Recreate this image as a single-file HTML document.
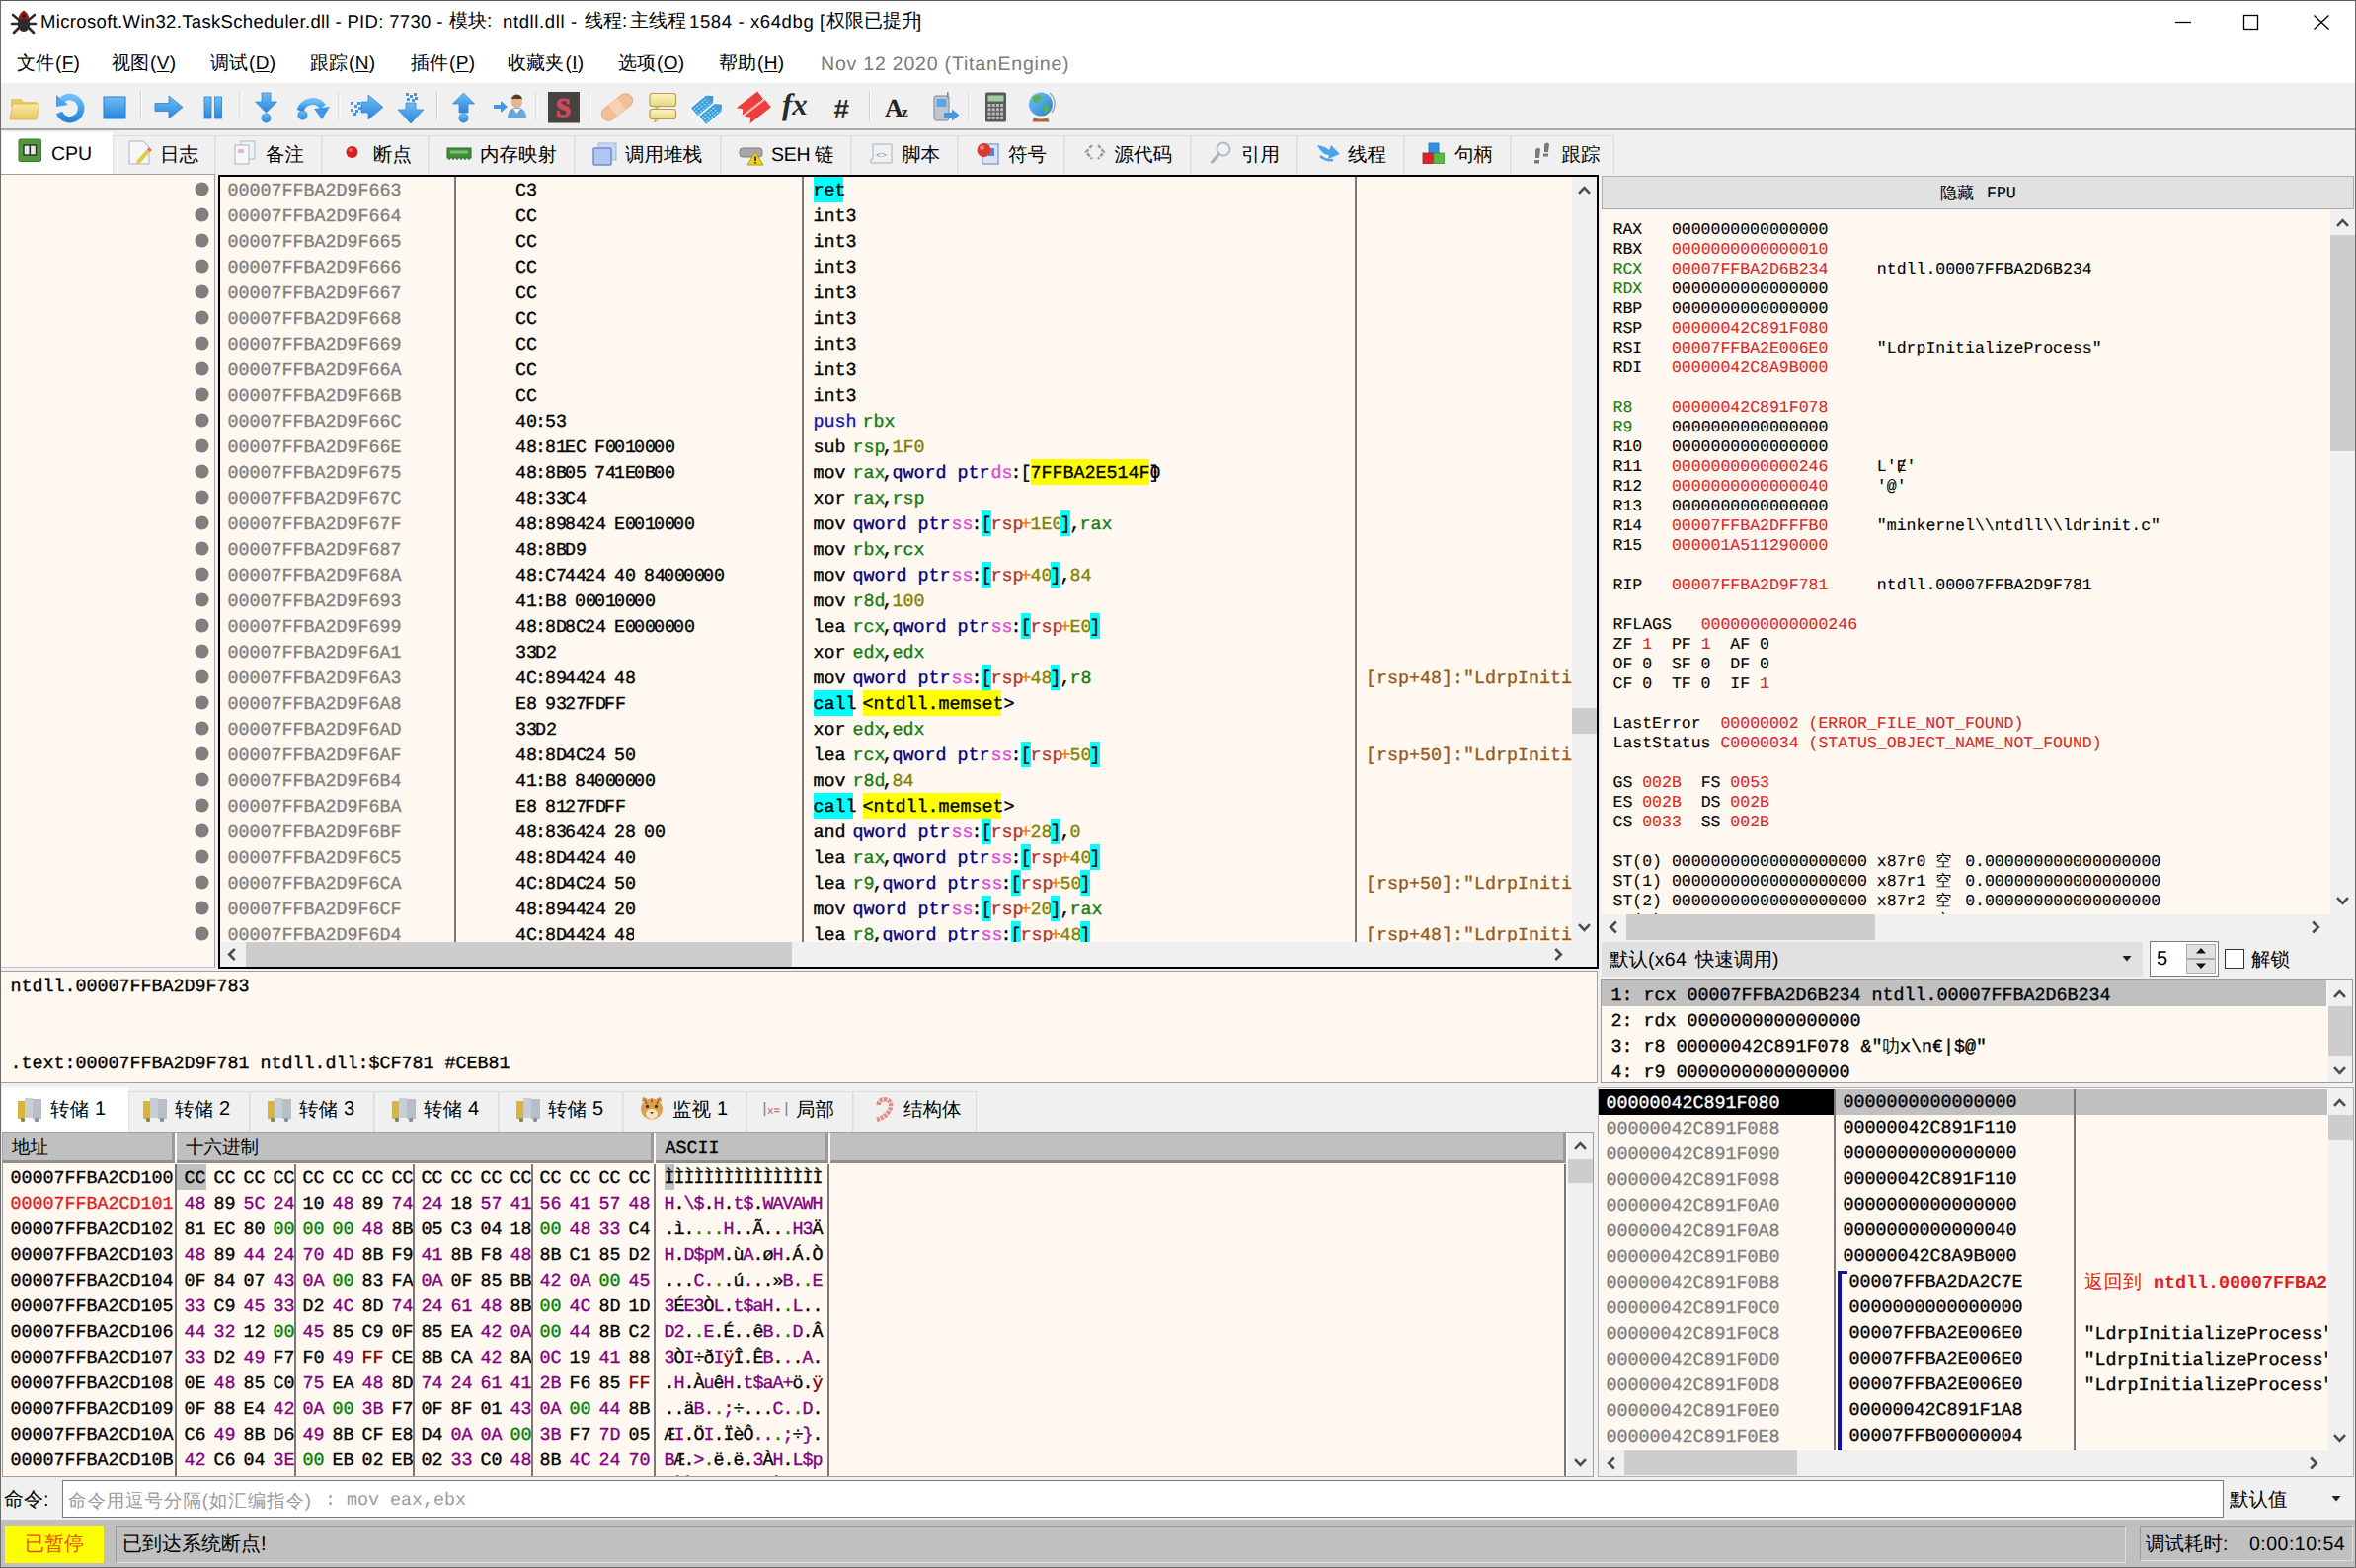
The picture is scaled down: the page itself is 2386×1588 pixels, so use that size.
<!DOCTYPE html>
<html lang="zh"><head><meta charset="utf-8"><title>x64dbg</title>
<style>
*{box-sizing:border-box}
html,body{margin:0;padding:0}
body{width:2386px;height:1588px;position:relative;overflow:hidden;background:#F0F0F0;
 font-family:"Liberation Sans",sans-serif;font-size:18.5px;color:#000;text-rendering:geometricPrecision;}
.a{position:absolute}
.u{position:absolute;white-space:pre;font-family:"Liberation Sans",sans-serif;line-height:26px;height:26px}
.m{font-family:"Liberation Mono",monospace;font-size:18.33px;white-space:pre;-webkit-text-stroke:0.35px}
.r{position:absolute;height:26px;line-height:29px;white-space:pre;font-family:"Liberation Mono",monospace;font-size:18.3333px;-webkit-text-stroke:0.35px}
.r i{font-style:normal;display:inline-block;vertical-align:top;height:26px;line-height:29px;overflow:visible}
.g{position:absolute;height:20px;line-height:24px;white-space:pre;font-family:"Liberation Mono",monospace;font-size:16.5px;-webkit-text-stroke:0.12px}
.g i{font-style:normal}
svg{position:absolute;overflow:visible}
</style></head>
<body>
<div class="a" style="left:0px;top:0px;width:2386px;height:84px;background:#FFFFFF;"></div>
<svg style="left:10px;top:9px" width="28" height="26" viewBox="0 0 28 26">
<g stroke="#2b2b2b" stroke-width="2.6" fill="none" stroke-linecap="round">
<path d="M9 11 L3 6"/><path d="M19 11 L25 6"/><path d="M8 15 L2 15"/><path d="M20 15 L26 15"/><path d="M9 19 L4 24"/><path d="M19 19 L24 24"/></g>
<ellipse cx="14" cy="15.5" rx="6.2" ry="7.5" fill="#2b2b2b"/>
<path d="M14 1.5 C10 4 8.5 7 9 10.5 L19 10.5 C19.5 7 18 4 14 1.5Z" fill="#8E1B1B"/>
<circle cx="14" cy="7" r="1.7" fill="#3a0a0a"/>
</svg>
<div class="u" style="left:41px;top:9px;font-size:18.5px;color:#000;letter-spacing:0.34px;">Microsoft.Win32.TaskScheduler.dll - PID: 7730 - </div>
<div class="u" style="left:455px;top:9px;font-size:19px;color:#000;">模块:</div>
<div class="u" style="left:509px;top:9px;font-size:18.5px;color:#000;letter-spacing:0.62px;">ntdll.dll - </div>
<div class="u" style="left:592px;top:9px;font-size:19px;color:#000;">线程:</div>
<div class="u" style="left:638px;top:9px;font-size:19px;color:#000;">主线程</div>
<div class="u" style="left:698px;top:9px;font-size:18.5px;color:#000;letter-spacing:0.62px;">1584 - x64dbg [</div>
<div class="u" style="left:837px;top:9px;font-size:19px;color:#000;">权限已提升</div>
<div class="u" style="left:928px;top:9px;font-size:18.5px;color:#000;">]</div>
<svg style="left:2190px;top:8px" width="190" height="30" viewBox="0 0 190 30">
<path d="M13 14.5 H29" stroke="#000" stroke-width="1.3"/>
<rect x="82.5" y="7.5" width="14" height="14" fill="none" stroke="#000" stroke-width="1.3"/>
<path d="M153.5 7.5 L168.5 21.5 M168.5 7.5 L153.5 21.5" stroke="#000" stroke-width="1.3"/>
</svg>
<div class="u" style="left:17px;top:52px;font-size:19px">文件</div>
<div class="u" style="left:56.0px;top:52px;font-size:19px;letter-spacing:0.3px">(<span style="text-decoration:underline;text-underline-offset:2px">F</span>)</div>
<div class="u" style="left:113px;top:52px;font-size:19px">视图</div>
<div class="u" style="left:152.0px;top:52px;font-size:19px;letter-spacing:0.3px">(<span style="text-decoration:underline;text-underline-offset:2px">V</span>)</div>
<div class="u" style="left:213px;top:52px;font-size:19px">调试</div>
<div class="u" style="left:252.0px;top:52px;font-size:19px;letter-spacing:0.3px">(<span style="text-decoration:underline;text-underline-offset:2px">D</span>)</div>
<div class="u" style="left:314px;top:52px;font-size:19px">跟踪</div>
<div class="u" style="left:353.0px;top:52px;font-size:19px;letter-spacing:0.3px">(<span style="text-decoration:underline;text-underline-offset:2px">N</span>)</div>
<div class="u" style="left:416px;top:52px;font-size:19px">插件</div>
<div class="u" style="left:455.0px;top:52px;font-size:19px;letter-spacing:0.3px">(<span style="text-decoration:underline;text-underline-offset:2px">P</span>)</div>
<div class="u" style="left:514px;top:52px;font-size:19px">收藏夹</div>
<div class="u" style="left:572.5px;top:52px;font-size:19px;letter-spacing:0.3px">(<span style="text-decoration:underline;text-underline-offset:2px">I</span>)</div>
<div class="u" style="left:626px;top:52px;font-size:19px">选项</div>
<div class="u" style="left:665.0px;top:52px;font-size:19px;letter-spacing:0.3px">(<span style="text-decoration:underline;text-underline-offset:2px">O</span>)</div>
<div class="u" style="left:728px;top:52px;font-size:19px">帮助</div>
<div class="u" style="left:767.0px;top:52px;font-size:19px;letter-spacing:0.3px">(<span style="text-decoration:underline;text-underline-offset:2px">H</span>)</div>
<div class="u" style="left:831px;top:52px;font-size:19.5px;color:#7A7A7A;letter-spacing:0.8px;">Nov 12 2020 (TitanEngine)</div>
<div class="a" style="left:1px;top:84px;width:2384px;height:46px;background:#F0F0F0;"></div>
<div class="a" style="left:0px;top:130px;width:2386px;height:2px;background:#A9A9A9;"></div>
<svg style="left:0;top:84px" width="1100" height="46" viewBox="0 84 1100 46">
<defs><linearGradient id="bl" x1="0" y1="0" x2="0" y2="1"><stop offset="0" stop-color="#6DBEF7"/><stop offset="1" stop-color="#2A85DB"/></linearGradient><linearGradient id="yl" x1="0" y1="0" x2="0" y2="1"><stop offset="0" stop-color="#F9E9A8"/><stop offset="1" stop-color="#E9C565"/></linearGradient><linearGradient id="yl2" x1="0" y1="0" x2="0" y2="1"><stop offset="0" stop-color="#FBF4C4"/><stop offset="1" stop-color="#E8D97E"/></linearGradient><linearGradient id="gl" x1="0" y1="0" x2="1" y2="1"><stop offset="0" stop-color="#7CC6F5"/><stop offset="1" stop-color="#1F7FD0"/></linearGradient></defs>
<rect x="142.0" y="92" width="1" height="30" fill="#D0D0D0"/><rect x="143.0" y="92" width="1" height="30" fill="#FFFFFF"/>
<rect x="242.5" y="92" width="1" height="30" fill="#D0D0D0"/><rect x="243.5" y="92" width="1" height="30" fill="#FFFFFF"/>
<rect x="342.5" y="92" width="1" height="30" fill="#D0D0D0"/><rect x="343.5" y="92" width="1" height="30" fill="#FFFFFF"/>
<rect x="442.0" y="92" width="1" height="30" fill="#D0D0D0"/><rect x="443.0" y="92" width="1" height="30" fill="#FFFFFF"/>
<rect x="542.5" y="92" width="1" height="30" fill="#D0D0D0"/><rect x="543.5" y="92" width="1" height="30" fill="#FFFFFF"/>
<rect x="596.5" y="92" width="1" height="30" fill="#D0D0D0"/><rect x="597.5" y="92" width="1" height="30" fill="#FFFFFF"/>
<rect x="880.0" y="92" width="1" height="30" fill="#D0D0D0"/><rect x="881.0" y="92" width="1" height="30" fill="#FFFFFF"/>
<rect x="980.5" y="92" width="1" height="30" fill="#D0D0D0"/><rect x="981.5" y="92" width="1" height="30" fill="#FFFFFF"/>
<path d="M11 100 h10 l3 3 h13 v5 h-26z" fill="#E8C867"/><path d="M10 121 L13 105 H40 L37 121Z" fill="url(#yl)" stroke="#D9B24E" stroke-width="0.8"/>
<path d="M63 101 A11.5 11.5 0 1 1 60 114" fill="none" stroke="url(#bl)" stroke-width="6.5"/><path d="M57 96 L57 108 L69 106Z" fill="#49A3EE"/>
<rect x="105" y="98" width="22" height="22" fill="url(#bl)" stroke="#2B7FD0" stroke-width="1"/>
<path d="M157 104.5 H171 V97 L185 108.5 L171 120 V112.5 H157Z" fill="url(#bl)" stroke="#2B7FD0" stroke-width="0.8"/>
<rect x="207" y="98" width="7" height="22" fill="url(#bl)" stroke="#2B7FD0" stroke-width="0.8"/><rect x="217.5" y="98" width="7" height="22" fill="url(#bl)" stroke="#2B7FD0" stroke-width="0.8"/>
<path d="M265 94 h9 v9 h6.5 l-11 11 l-11 -11 h6.5z" fill="url(#bl)" stroke="#2B7FD0" stroke-width="0.7"/><circle cx="269.5" cy="119.5" r="4.6" fill="url(#bl)" stroke="#2B7FD0" stroke-width="0.7"/>
<path d="M304 112 A13 13 0 0 1 327 108" fill="none" stroke="url(#bl)" stroke-width="7"/><path d="M318 110 L334 108 L326 121Z" fill="#3F97E6"/><circle cx="306.5" cy="116.5" r="4.6" fill="url(#bl)" stroke="#2B7FD0" stroke-width="0.7"/>
<path d="M366 103 H373 V96 L388 108.5 L373 121 V114 H366Z" fill="url(#bl)" stroke="#2B7FD0" stroke-width="0.7"/>
<rect x="355" y="103" width="3" height="3" fill="#3F97E6"/>
<rect x="359" y="106" width="3" height="3" fill="#3F97E6"/>
<rect x="355" y="110" width="3" height="3" fill="#3F97E6"/>
<rect x="360" y="111" width="3" height="3" fill="#3F97E6"/>
<rect x="362" y="103" width="3" height="3" fill="#3F97E6"/>
<rect x="363" y="108" width="3" height="3" fill="#3F97E6"/>
<rect x="358" y="114" width="3" height="3" fill="#3F97E6"/>
<path d="M411 104 V111 H403 L416 125 L429 111 H421 V104Z" fill="url(#bl)" stroke="#2B7FD0" stroke-width="0.7"/>
<rect x="411" y="94" width="3" height="3" fill="#3F97E6"/>
<rect x="415" y="96" width="3" height="3" fill="#3F97E6"/>
<rect x="419" y="94" width="3" height="3" fill="#3F97E6"/>
<rect x="412" y="99" width="3" height="3" fill="#3F97E6"/>
<rect x="417" y="100" width="3" height="3" fill="#3F97E6"/>
<rect x="420" y="98" width="3" height="3" fill="#3F97E6"/>
<path d="M465 114 h9 v-9 h6.5 l-11 -11 l-11 11 h6.5z" fill="url(#bl)" stroke="#2B7FD0" stroke-width="0.7"/><circle cx="469.5" cy="119.5" r="4.6" fill="url(#bl)" stroke="#2B7FD0" stroke-width="0.7"/>
<path d="M500 106 H507 V102 L514 108 L507 114 V110 H500Z" fill="#3F97E6"/><circle cx="523.5" cy="103.5" r="5.5" fill="#E8B58F"/><path d="M518 101 a5.5 5.5 0 0 1 11 0 l-1 -1 h-9z" fill="#5A3A22"/><path d="M514 120 c0 -9 5 -11 9.5 -11 s9.5 2 9.5 11z" fill="#6FA6DA"/><path d="M520 110 l3.5 5 l3.5 -5z" fill="#fff"/>
<rect x="555" y="93" width="32" height="31.5" fill="#474343"/><text x="570.5" y="118" font-family="Liberation Serif" font-weight="bold" font-size="27" fill="#CF4A58" text-anchor="middle" stroke="#CF4A58" stroke-width="1.2">S</text>
<g transform="rotate(-38 625 108.5)"><rect x="607" y="101.5" width="36" height="14" rx="7" fill="#F4BE94" stroke="#E0A070" stroke-width="0.8"/><rect x="619.5" y="101.5" width="11" height="14" fill="#F8D2B2"/></g>
<rect x="658" y="94.5" width="26.5" height="13" rx="2.5" fill="url(#yl2)" stroke="#B89D55" stroke-width="1.2"/><path d="M664 107.5 l0 3.5 l4 -3.5z" fill="#E9DC98" stroke="#B89D55" stroke-width="1"/><rect x="658" y="110.5" width="26.5" height="10" rx="2.5" fill="url(#yl2)" stroke="#B89D55" stroke-width="1.2"/><path d="M663 120.5 l0 3.5 l4 -3.5z" fill="#E9DC98" stroke="#B89D55" stroke-width="1"/>
<g transform="rotate(-40 717 109)"><path d="M703 97.5 h21 l6 6 l-6 6 h-21z" fill="#3A9FDC" stroke="#F4F8FB" stroke-width="1.6"/><path d="M704 109.5 h21 l6 6 l-6 6 h-21z" fill="#3A9FDC" stroke="#F4F8FB" stroke-width="1.6"/><path d="M705 101 h18 M705 104 h18 M705 107 h18 M706 113 h18 M706 116 h18 M706 119 h18" stroke="#BFE0F4" stroke-width="1.1" stroke-dasharray="2 1.5"/></g>
<g transform="rotate(-38 763 108.5)"><path d="M749 98.5 h27 v9.5 h-27 l4.5 -4.7z" fill="#EE3B3B"/><path d="M750 110 h27 v9.5 h-27 l4.5 -4.7z" fill="#EE3B3B"/><path d="M752 108.8 h25" stroke="#F59A9A" stroke-width="1"/></g>
<text x="792" y="116" font-family="Liberation Serif" font-style="italic" font-weight="bold" font-size="31" fill="#2A2A2A">fx</text>
<text x="844" y="120" font-family="Liberation Sans" font-style="italic" font-weight="bold" font-size="28" fill="#2A2A2A">#</text>
<text x="896" y="118" font-family="Liberation Serif" font-weight="bold" font-size="26" fill="#222">A</text><text x="913" y="118" font-family="Liberation Serif" font-weight="bold" font-size="15" fill="#222">z</text>
<rect x="946" y="97" width="15" height="25" rx="2" fill="#BFC6CE" stroke="#7F8893" stroke-width="1"/><rect x="948.5" y="100" width="10" height="8" fill="#58A7E6"/><rect x="959" y="93" width="1.6" height="6" fill="#7F8893"/><path d="M956 114 H964 V110.5 L971.5 116.5 L964 122.5 V119 H956Z" fill="#3F97E6"/>
<rect x="998" y="93.5" width="21" height="30" rx="1.5" fill="#5A5A5A"/><rect x="1000.5" y="96.5" width="16" height="6" fill="#9FCF9A"/>
<rect x="1000.5" y="105.0" width="3" height="3" fill="#B9B9B9"/>
<rect x="1004.7" y="105.0" width="3" height="3" fill="#B9B9B9"/>
<rect x="1008.9" y="105.0" width="3" height="3" fill="#B9B9B9"/>
<rect x="1013.1" y="105.0" width="3" height="3" fill="#B9B9B9"/>
<rect x="1000.5" y="109.3" width="3" height="3" fill="#B9B9B9"/>
<rect x="1004.7" y="109.3" width="3" height="3" fill="#B9B9B9"/>
<rect x="1008.9" y="109.3" width="3" height="3" fill="#B9B9B9"/>
<rect x="1013.1" y="109.3" width="3" height="3" fill="#B9B9B9"/>
<rect x="1000.5" y="113.6" width="3" height="3" fill="#B9B9B9"/>
<rect x="1004.7" y="113.6" width="3" height="3" fill="#B9B9B9"/>
<rect x="1008.9" y="113.6" width="3" height="3" fill="#B9B9B9"/>
<rect x="1013.1" y="113.6" width="3" height="3" fill="#B9B9B9"/>
<rect x="1000.5" y="117.9" width="3" height="3" fill="#B9B9B9"/>
<rect x="1004.7" y="117.9" width="3" height="3" fill="#B9B9B9"/>
<rect x="1008.9" y="117.9" width="3" height="3" fill="#B9B9B9"/>
<rect x="1013.1" y="117.9" width="3" height="3" fill="#B9B9B9"/>
<circle cx="1054" cy="105.5" r="12" fill="url(#gl)"/><path d="M1046 98 q5 -4 9 0 q-1 5 -5 6 q-5 0 -4 -6z M1056 106 q6 -2 7 3 q-2 6 -6 5z" fill="#57B05A"/><path d="M1047 119 q7 3 14 0 l1.5 4.5 h-17z" fill="#B5642F"/><path d="M1063 94 a14.5 14.5 0 0 1 2 20" fill="none" stroke="#A0A8B0" stroke-width="1.5"/>
</svg>
<div class="a" style="left:1px;top:132px;width:2384px;height:45px;background:#F0F0F0;"></div>
<div class="a" style="left:2px;top:134px;width:112px;height:43px;background:#FFFFFF;"></div>
<div class="u" style="left:52px;top:143px;font-size:19.5px;letter-spacing:0px">CPU</div>
<div class="a" style="left:114px;top:137px;width:104px;height:40px;border:1px solid #DCDCDC;border-bottom:none;border-left:1px solid #E4E4E4;"></div>
<div class="u" style="left:162px;top:143.5px;font-size:19.5px">日志</div>
<div class="a" style="left:218px;top:137px;width:108px;height:40px;border:1px solid #DCDCDC;border-bottom:none;border-left:1px solid #E4E4E4;"></div>
<div class="u" style="left:269px;top:143.5px;font-size:19.5px">备注</div>
<div class="a" style="left:326px;top:137px;width:108px;height:40px;border:1px solid #DCDCDC;border-bottom:none;border-left:1px solid #E4E4E4;"></div>
<div class="u" style="left:378px;top:143.5px;font-size:19.5px">断点</div>
<div class="a" style="left:434px;top:137px;width:148px;height:40px;border:1px solid #DCDCDC;border-bottom:none;border-left:1px solid #E4E4E4;"></div>
<div class="u" style="left:486px;top:143.5px;font-size:19.5px">内存映射</div>
<div class="a" style="left:582px;top:137px;width:148px;height:40px;border:1px solid #DCDCDC;border-bottom:none;border-left:1px solid #E4E4E4;"></div>
<div class="u" style="left:633px;top:143.5px;font-size:19.5px">调用堆栈</div>
<div class="a" style="left:730px;top:137px;width:132px;height:40px;border:1px solid #DCDCDC;border-bottom:none;border-left:1px solid #E4E4E4;"></div>
<div class="u" style="left:781px;top:143.5px;font-size:19.5px;letter-spacing:-0.3px">SEH </div>
<div class="u" style="left:825px;top:143.5px;font-size:19.5px">链</div>
<div class="a" style="left:862px;top:137px;width:108px;height:40px;border:1px solid #DCDCDC;border-bottom:none;border-left:1px solid #E4E4E4;"></div>
<div class="u" style="left:913px;top:143.5px;font-size:19.5px">脚本</div>
<div class="a" style="left:970px;top:137px;width:108px;height:40px;border:1px solid #DCDCDC;border-bottom:none;border-left:1px solid #E4E4E4;"></div>
<div class="u" style="left:1021px;top:143.5px;font-size:19.5px">符号</div>
<div class="a" style="left:1078px;top:137px;width:128px;height:40px;border:1px solid #DCDCDC;border-bottom:none;border-left:1px solid #E4E4E4;"></div>
<div class="u" style="left:1128.5px;top:143.5px;font-size:19.5px">源代码</div>
<div class="a" style="left:1206px;top:137px;width:108px;height:40px;border:1px solid #DCDCDC;border-bottom:none;border-left:1px solid #E4E4E4;"></div>
<div class="u" style="left:1257px;top:143.5px;font-size:19.5px">引用</div>
<div class="a" style="left:1314px;top:137px;width:108px;height:40px;border:1px solid #DCDCDC;border-bottom:none;border-left:1px solid #E4E4E4;"></div>
<div class="u" style="left:1365px;top:143.5px;font-size:19.5px">线程</div>
<div class="a" style="left:1422px;top:137px;width:108px;height:40px;border:1px solid #DCDCDC;border-bottom:none;border-left:1px solid #E4E4E4;"></div>
<div class="u" style="left:1473px;top:143.5px;font-size:19.5px">句柄</div>
<div class="a" style="left:1530px;top:137px;width:105px;height:40px;border:1px solid #DCDCDC;border-bottom:none;border-left:1px solid #E4E4E4;"></div>
<div class="u" style="left:1581.5px;top:143.5px;font-size:19.5px">跟踪</div>
<svg style="left:0;top:132px" width="1640" height="45" viewBox="0 132 1640 45">
<rect x="19" y="141" width="22.5" height="22.5" rx="1.5" fill="#4E9A3A" stroke="#3B7A2B" stroke-width="1"/><rect x="24" y="147" width="12.5" height="10" fill="#E9EEE6" stroke="#2F2F2F" stroke-width="1.4"/><rect x="29.5" y="147" width="1.6" height="10" fill="#2F2F2F"/>
<path d="M131 143 h14 l6 6 v17 h-20z" fill="#F4F7FA" stroke="#A9B4BF" stroke-width="1"/><path d="M139 162 l10 -11 l3 3 l-10 11 l-4 1z" fill="#E8C84A"/><path d="M149 151 l2 -2 l3 3 l-2 2z" fill="#E07070"/>
<rect x="244" y="143" width="14" height="18" fill="#EEF2F6" stroke="#B0BAC4" stroke-width="1"/><rect x="238" y="147" width="14" height="19" fill="#F6F8FA" stroke="#A9B4BF" stroke-width="1"/><rect x="241" y="151" width="6" height="4" fill="#E8B5C0"/>
<circle cx="356.5" cy="154" r="6" fill="#D81E1E"/><circle cx="355" cy="152" r="2" fill="#EE6A6A"/>
<rect x="453" y="150" width="24" height="10" fill="#3F8F3A" stroke="#2E6E2A" stroke-width="1"/><rect x="456" y="152.5" width="18" height="3" fill="#79C070"/><path d="M455 160 v2 M459 160 v2 M463 160 v2 M467 160 v2 M471 160 v2 M475 160 v2" stroke="#2E6E2A" stroke-width="1.4"/>
<rect x="606" y="145" width="18" height="17" fill="#C9D7F0" stroke="#9FB3DC" stroke-width="1"/><rect x="601" y="150" width="18" height="17" rx="1" fill="#AFC6EE" stroke="#6F8FD0" stroke-width="1.5"/>
<rect x="749" y="150" width="23" height="9" rx="3" fill="#A8A8A8" stroke="#7E7E7E" stroke-width="1"/><path d="M765 154 l8 13 h-16z" fill="#F2D21C" stroke="#B89C10" stroke-width="1"/><rect x="764.2" y="158.5" width="1.8" height="4.5" fill="#333"/><rect x="764.2" y="164" width="1.8" height="1.6" fill="#333"/>
<path d="M884 146 h19 v19 h-21 v-4 h2z" fill="#EEF0F2" stroke="#AAB2BA" stroke-width="1"/><text x="887" y="160" font-family="Liberation Mono" font-size="9" fill="#8A94A0">&lt;&gt;</text>
<rect x="995" y="146" width="16" height="20" fill="#D9E3F4" stroke="#7A93C8" stroke-width="1.2"/><rect x="1001" y="150" width="6" height="8" fill="#5E7FD0"/><circle cx="996.5" cy="152" r="7" fill="#D83A34"/><circle cx="994.5" cy="149.5" r="2.3" fill="#F08A80"/>
<path d="M1106 147 l-6 7 l6 7 M1112 147 l6 7 l-6 7" fill="none" stroke="#9A9A9A" stroke-width="2.4" stroke-dasharray="4 1.5"/>
<circle cx="1239" cy="151" r="6.5" fill="#EEF2F6" stroke="#B4BCC6" stroke-width="2"/><path d="M1234.5 156 l-7 8" stroke="#B0B0B0" stroke-width="3.2" stroke-linecap="round"/>
<path d="M1334 147 q8 1 12 5 l2 -5 l9 9 l-12 5 l1 -4 q-7 0 -12 -10z" fill="#4CA3EA"/><path d="M1337 158 q6 5 13 4" fill="none" stroke="#4CA3EA" stroke-width="2.5"/>
<rect x="1447" y="145" width="10" height="10" fill="#2F8FE0" stroke="#1E6FBF" stroke-width="0.8"/><rect x="1441" y="155" width="10.5" height="10.5" fill="#D8262C" stroke="#A81C20" stroke-width="0.8"/><rect x="1452" y="155" width="10.5" height="10.5" fill="#58B947" stroke="#3E9030" stroke-width="0.8"/>
<path d="M1555 152 q2 -4 5 -1 l-1 9 l-4 0z M1564 146 q3 -3 5 0 l-1 8 l-4 0z" fill="#7A7A7A"/><rect x="1554" y="162" width="5" height="3.5" fill="#7A7A7A"/><rect x="1563" y="155.5" width="5" height="3" fill="#7A7A7A"/>
</svg>
<div class="a" style="left:1px;top:177px;width:216px;height:802px;background:#FFF8F0;"></div>
<div class="a" style="left:0px;top:176px;width:218px;height:1px;background:#A0A0A0;"></div>
<div class="a" style="left:217px;top:177px;width:1px;height:803px;background:#A0A0A0;"></div>
<div class="a" style="left:1px;top:979px;width:217px;height:1px;background:#C8C0D0;"></div>
<div class="a" style="left:221px;top:177px;width:1398px;height:804px;background:#000;"></div>
<div class="a" style="left:223px;top:179px;width:1394px;height:800px;background:#FFF8F0;"></div>
<div class="a" style="left:460px;top:179px;width:2px;height:775px;background:#7C7878;"></div>
<div class="a" style="left:812px;top:179px;width:2px;height:775px;background:#7C7878;"></div>
<div class="a" style="left:1372px;top:179px;width:2px;height:775px;background:#7C7878;"></div>
<svg style="left:0;top:0" width="220" height="980"><circle cx="204.5" cy="191.5" r="7" fill="#7F7F7F"/><circle cx="204.5" cy="217.5" r="7" fill="#7F7F7F"/><circle cx="204.5" cy="243.5" r="7" fill="#7F7F7F"/><circle cx="204.5" cy="269.5" r="7" fill="#7F7F7F"/><circle cx="204.5" cy="295.5" r="7" fill="#7F7F7F"/><circle cx="204.5" cy="321.5" r="7" fill="#7F7F7F"/><circle cx="204.5" cy="347.5" r="7" fill="#7F7F7F"/><circle cx="204.5" cy="373.5" r="7" fill="#7F7F7F"/><circle cx="204.5" cy="399.5" r="7" fill="#7F7F7F"/><circle cx="204.5" cy="425.5" r="7" fill="#7F7F7F"/><circle cx="204.5" cy="451.5" r="7" fill="#7F7F7F"/><circle cx="204.5" cy="477.5" r="7" fill="#7F7F7F"/><circle cx="204.5" cy="503.5" r="7" fill="#7F7F7F"/><circle cx="204.5" cy="529.5" r="7" fill="#7F7F7F"/><circle cx="204.5" cy="555.5" r="7" fill="#7F7F7F"/><circle cx="204.5" cy="581.5" r="7" fill="#7F7F7F"/><circle cx="204.5" cy="607.5" r="7" fill="#7F7F7F"/><circle cx="204.5" cy="633.5" r="7" fill="#7F7F7F"/><circle cx="204.5" cy="659.5" r="7" fill="#7F7F7F"/><circle cx="204.5" cy="685.5" r="7" fill="#7F7F7F"/><circle cx="204.5" cy="711.5" r="7" fill="#7F7F7F"/><circle cx="204.5" cy="737.5" r="7" fill="#7F7F7F"/><circle cx="204.5" cy="763.5" r="7" fill="#7F7F7F"/><circle cx="204.5" cy="789.5" r="7" fill="#7F7F7F"/><circle cx="204.5" cy="815.5" r="7" fill="#7F7F7F"/><circle cx="204.5" cy="841.5" r="7" fill="#7F7F7F"/><circle cx="204.5" cy="867.5" r="7" fill="#7F7F7F"/><circle cx="204.5" cy="893.5" r="7" fill="#7F7F7F"/><circle cx="204.5" cy="919.5" r="7" fill="#7F7F7F"/><circle cx="204.5" cy="945.5" r="7" fill="#7F7F7F"/></svg>
<div class="r" style="left:230.5px;top:179px;color:#808080;">00007FFBA2D9F663</div>
<div class="r" style="left:522px;top:179px;"><i style="width:20px;">C3</i></div>
<div class="r" style="left:823.5px;top:179px;"><i style="width:30px;background:#00FFFF;">ret</i></div>
<div class="r" style="left:230.5px;top:205px;color:#808080;">00007FFBA2D9F664</div>
<div class="r" style="left:522px;top:205px;"><i style="width:20px;">CC</i></div>
<div class="r" style="left:823.5px;top:205px;"><i style="width:40px;">int3</i></div>
<div class="r" style="left:230.5px;top:231px;color:#808080;">00007FFBA2D9F665</div>
<div class="r" style="left:522px;top:231px;"><i style="width:20px;">CC</i></div>
<div class="r" style="left:823.5px;top:231px;"><i style="width:40px;">int3</i></div>
<div class="r" style="left:230.5px;top:257px;color:#808080;">00007FFBA2D9F666</div>
<div class="r" style="left:522px;top:257px;"><i style="width:20px;">CC</i></div>
<div class="r" style="left:823.5px;top:257px;"><i style="width:40px;">int3</i></div>
<div class="r" style="left:230.5px;top:283px;color:#808080;">00007FFBA2D9F667</div>
<div class="r" style="left:522px;top:283px;"><i style="width:20px;">CC</i></div>
<div class="r" style="left:823.5px;top:283px;"><i style="width:40px;">int3</i></div>
<div class="r" style="left:230.5px;top:309px;color:#808080;">00007FFBA2D9F668</div>
<div class="r" style="left:522px;top:309px;"><i style="width:20px;">CC</i></div>
<div class="r" style="left:823.5px;top:309px;"><i style="width:40px;">int3</i></div>
<div class="r" style="left:230.5px;top:335px;color:#808080;">00007FFBA2D9F669</div>
<div class="r" style="left:522px;top:335px;"><i style="width:20px;">CC</i></div>
<div class="r" style="left:823.5px;top:335px;"><i style="width:40px;">int3</i></div>
<div class="r" style="left:230.5px;top:361px;color:#808080;">00007FFBA2D9F66A</div>
<div class="r" style="left:522px;top:361px;"><i style="width:20px;">CC</i></div>
<div class="r" style="left:823.5px;top:361px;"><i style="width:40px;">int3</i></div>
<div class="r" style="left:230.5px;top:387px;color:#808080;">00007FFBA2D9F66B</div>
<div class="r" style="left:522px;top:387px;"><i style="width:20px;">CC</i></div>
<div class="r" style="left:823.5px;top:387px;"><i style="width:40px;">int3</i></div>
<div class="r" style="left:230.5px;top:413px;color:#808080;">00007FFBA2D9F66C</div>
<div class="r" style="left:522px;top:413px;"><i style="width:20px;">40</i><i style="width:10px;">:</i><i style="width:20px;">53</i></div>
<div class="r" style="left:823.5px;top:413px;"><i style="width:40px;color:#1414B4;">push</i><i style="width:10px;"> </i><i style="width:30px;color:#127C12;">rbx</i></div>
<div class="r" style="left:230.5px;top:439px;color:#808080;">00007FFBA2D9F66E</div>
<div class="r" style="left:522px;top:439px;"><i style="width:20px;">48</i><i style="width:10px;">:</i><i style="width:20px;">81</i><i style="width:20px;">EC</i><i style="width:10px;"> </i><i style="width:20px;">F0</i><i style="width:20px;">01</i><i style="width:20px;">00</i><i style="width:20px;">00</i></div>
<div class="r" style="left:823.5px;top:439px;"><i style="width:30px;">sub</i><i style="width:10px;"> </i><i style="width:30px;color:#127C12;">rsp</i><i style="width:10px;">,</i><i style="width:30px;color:#828200;">1F0</i></div>
<div class="r" style="left:230.5px;top:465px;color:#808080;">00007FFBA2D9F675</div>
<div class="r" style="left:522px;top:465px;"><i style="width:20px;">48</i><i style="width:10px;">:</i><i style="width:20px;">8B</i><i style="width:20px;">05</i><i style="width:10px;"> </i><i style="width:20px;">74</i><i style="width:20px;">1E</i><i style="width:20px;">0B</i><i style="width:20px;">00</i></div>
<div class="r" style="left:823.5px;top:465px;"><i style="width:30px;">mov</i><i style="width:10px;"> </i><i style="width:30px;color:#127C12;">rax</i><i style="width:10px;">,</i><i style="width:100px;color:#000080;">qword ptr </i><i style="width:20px;color:#D848D8;">ds</i><i style="width:10px;">:</i><i style="width:10px;">[</i><i style="width:120px;background:#FFFF00;">7FFBA2E514F0</i><i style="width:10px;">]</i></div>
<div class="r" style="left:230.5px;top:491px;color:#808080;">00007FFBA2D9F67C</div>
<div class="r" style="left:522px;top:491px;"><i style="width:20px;">48</i><i style="width:10px;">:</i><i style="width:20px;">33</i><i style="width:20px;">C4</i></div>
<div class="r" style="left:823.5px;top:491px;"><i style="width:30px;">xor</i><i style="width:10px;"> </i><i style="width:30px;color:#127C12;">rax</i><i style="width:10px;">,</i><i style="width:30px;color:#127C12;">rsp</i></div>
<div class="r" style="left:230.5px;top:517px;color:#808080;">00007FFBA2D9F67F</div>
<div class="r" style="left:522px;top:517px;"><i style="width:20px;">48</i><i style="width:10px;">:</i><i style="width:20px;">89</i><i style="width:20px;">84</i><i style="width:20px;">24</i><i style="width:10px;"> </i><i style="width:20px;">E0</i><i style="width:20px;">01</i><i style="width:20px;">00</i><i style="width:20px;">00</i></div>
<div class="r" style="left:823.5px;top:517px;"><i style="width:30px;">mov</i><i style="width:10px;"> </i><i style="width:100px;color:#000080;">qword ptr </i><i style="width:20px;color:#D848D8;">ss</i><i style="width:10px;">:</i><i style="width:10px;background:#00FFFF;">[</i><i style="width:30px;color:#B03434;">rsp</i><i style="width:10px;color:#F27711;">+</i><i style="width:30px;color:#828200;">1E0</i><i style="width:10px;background:#00FFFF;">]</i><i style="width:10px;">,</i><i style="width:30px;color:#127C12;">rax</i></div>
<div class="r" style="left:230.5px;top:543px;color:#808080;">00007FFBA2D9F687</div>
<div class="r" style="left:522px;top:543px;"><i style="width:20px;">48</i><i style="width:10px;">:</i><i style="width:20px;">8B</i><i style="width:20px;">D9</i></div>
<div class="r" style="left:823.5px;top:543px;"><i style="width:30px;">mov</i><i style="width:10px;"> </i><i style="width:30px;color:#127C12;">rbx</i><i style="width:10px;">,</i><i style="width:30px;color:#127C12;">rcx</i></div>
<div class="r" style="left:230.5px;top:569px;color:#808080;">00007FFBA2D9F68A</div>
<div class="r" style="left:522px;top:569px;"><i style="width:20px;">48</i><i style="width:10px;">:</i><i style="width:20px;">C7</i><i style="width:20px;">44</i><i style="width:20px;">24</i><i style="width:10px;"> </i><i style="width:20px;">40</i><i style="width:10px;"> </i><i style="width:20px;">84</i><i style="width:20px;">00</i><i style="width:20px;">00</i><i style="width:20px;">00</i></div>
<div class="r" style="left:823.5px;top:569px;"><i style="width:30px;">mov</i><i style="width:10px;"> </i><i style="width:100px;color:#000080;">qword ptr </i><i style="width:20px;color:#D848D8;">ss</i><i style="width:10px;">:</i><i style="width:10px;background:#00FFFF;">[</i><i style="width:30px;color:#B03434;">rsp</i><i style="width:10px;color:#F27711;">+</i><i style="width:20px;color:#828200;">40</i><i style="width:10px;background:#00FFFF;">]</i><i style="width:10px;">,</i><i style="width:20px;color:#828200;">84</i></div>
<div class="r" style="left:230.5px;top:595px;color:#808080;">00007FFBA2D9F693</div>
<div class="r" style="left:522px;top:595px;"><i style="width:20px;">41</i><i style="width:10px;">:</i><i style="width:20px;">B8</i><i style="width:10px;"> </i><i style="width:20px;">00</i><i style="width:20px;">01</i><i style="width:20px;">00</i><i style="width:20px;">00</i></div>
<div class="r" style="left:823.5px;top:595px;"><i style="width:30px;">mov</i><i style="width:10px;"> </i><i style="width:30px;color:#127C12;">r8d</i><i style="width:10px;">,</i><i style="width:30px;color:#828200;">100</i></div>
<div class="r" style="left:230.5px;top:621px;color:#808080;">00007FFBA2D9F699</div>
<div class="r" style="left:522px;top:621px;"><i style="width:20px;">48</i><i style="width:10px;">:</i><i style="width:20px;">8D</i><i style="width:20px;">8C</i><i style="width:20px;">24</i><i style="width:10px;"> </i><i style="width:20px;">E0</i><i style="width:20px;">00</i><i style="width:20px;">00</i><i style="width:20px;">00</i></div>
<div class="r" style="left:823.5px;top:621px;"><i style="width:30px;">lea</i><i style="width:10px;"> </i><i style="width:30px;color:#127C12;">rcx</i><i style="width:10px;">,</i><i style="width:100px;color:#000080;">qword ptr </i><i style="width:20px;color:#D848D8;">ss</i><i style="width:10px;">:</i><i style="width:10px;background:#00FFFF;">[</i><i style="width:30px;color:#B03434;">rsp</i><i style="width:10px;color:#F27711;">+</i><i style="width:20px;color:#828200;">E0</i><i style="width:10px;background:#00FFFF;">]</i></div>
<div class="r" style="left:230.5px;top:647px;color:#808080;">00007FFBA2D9F6A1</div>
<div class="r" style="left:522px;top:647px;"><i style="width:20px;">33</i><i style="width:20px;">D2</i></div>
<div class="r" style="left:823.5px;top:647px;"><i style="width:30px;">xor</i><i style="width:10px;"> </i><i style="width:30px;color:#127C12;">edx</i><i style="width:10px;">,</i><i style="width:30px;color:#127C12;">edx</i></div>
<div class="r" style="left:230.5px;top:673px;color:#808080;">00007FFBA2D9F6A3</div>
<div class="r" style="left:522px;top:673px;"><i style="width:20px;">4C</i><i style="width:10px;">:</i><i style="width:20px;">89</i><i style="width:20px;">44</i><i style="width:20px;">24</i><i style="width:10px;"> </i><i style="width:20px;">48</i></div>
<div class="r" style="left:823.5px;top:673px;"><i style="width:30px;">mov</i><i style="width:10px;"> </i><i style="width:100px;color:#000080;">qword ptr </i><i style="width:20px;color:#D848D8;">ss</i><i style="width:10px;">:</i><i style="width:10px;background:#00FFFF;">[</i><i style="width:30px;color:#B03434;">rsp</i><i style="width:10px;color:#F27711;">+</i><i style="width:20px;color:#828200;">48</i><i style="width:10px;background:#00FFFF;">]</i><i style="width:10px;">,</i><i style="width:20px;color:#127C12;">r8</i></div>
<div class="r" style="left:1383px;top:673px;width:208.5px;overflow:hidden;color:#96591A;">[rsp+48]:"LdrpInitializeProcess"</div>
<div class="r" style="left:230.5px;top:699px;color:#808080;">00007FFBA2D9F6A8</div>
<div class="r" style="left:522px;top:699px;"><i style="width:20px;">E8</i><i style="width:10px;"> </i><i style="width:20px;">93</i><i style="width:20px;">27</i><i style="width:20px;">FD</i><i style="width:20px;">FF</i></div>
<div class="r" style="left:823.5px;top:699px;"><i style="width:40px;background:#00FFFF;">call</i><i style="width:10px;"> </i><i style="width:140px;background:#FFFF00;">&lt;ntdll.memset&gt;</i></div>
<div class="r" style="left:230.5px;top:725px;color:#808080;">00007FFBA2D9F6AD</div>
<div class="r" style="left:522px;top:725px;"><i style="width:20px;">33</i><i style="width:20px;">D2</i></div>
<div class="r" style="left:823.5px;top:725px;"><i style="width:30px;">xor</i><i style="width:10px;"> </i><i style="width:30px;color:#127C12;">edx</i><i style="width:10px;">,</i><i style="width:30px;color:#127C12;">edx</i></div>
<div class="r" style="left:230.5px;top:751px;color:#808080;">00007FFBA2D9F6AF</div>
<div class="r" style="left:522px;top:751px;"><i style="width:20px;">48</i><i style="width:10px;">:</i><i style="width:20px;">8D</i><i style="width:20px;">4C</i><i style="width:20px;">24</i><i style="width:10px;"> </i><i style="width:20px;">50</i></div>
<div class="r" style="left:823.5px;top:751px;"><i style="width:30px;">lea</i><i style="width:10px;"> </i><i style="width:30px;color:#127C12;">rcx</i><i style="width:10px;">,</i><i style="width:100px;color:#000080;">qword ptr </i><i style="width:20px;color:#D848D8;">ss</i><i style="width:10px;">:</i><i style="width:10px;background:#00FFFF;">[</i><i style="width:30px;color:#B03434;">rsp</i><i style="width:10px;color:#F27711;">+</i><i style="width:20px;color:#828200;">50</i><i style="width:10px;background:#00FFFF;">]</i></div>
<div class="r" style="left:1383px;top:751px;width:208.5px;overflow:hidden;color:#96591A;">[rsp+50]:"LdrpInitializeProcess"</div>
<div class="r" style="left:230.5px;top:777px;color:#808080;">00007FFBA2D9F6B4</div>
<div class="r" style="left:522px;top:777px;"><i style="width:20px;">41</i><i style="width:10px;">:</i><i style="width:20px;">B8</i><i style="width:10px;"> </i><i style="width:20px;">84</i><i style="width:20px;">00</i><i style="width:20px;">00</i><i style="width:20px;">00</i></div>
<div class="r" style="left:823.5px;top:777px;"><i style="width:30px;">mov</i><i style="width:10px;"> </i><i style="width:30px;color:#127C12;">r8d</i><i style="width:10px;">,</i><i style="width:20px;color:#828200;">84</i></div>
<div class="r" style="left:230.5px;top:803px;color:#808080;">00007FFBA2D9F6BA</div>
<div class="r" style="left:522px;top:803px;"><i style="width:20px;">E8</i><i style="width:10px;"> </i><i style="width:20px;">81</i><i style="width:20px;">27</i><i style="width:20px;">FD</i><i style="width:20px;">FF</i></div>
<div class="r" style="left:823.5px;top:803px;"><i style="width:40px;background:#00FFFF;">call</i><i style="width:10px;"> </i><i style="width:140px;background:#FFFF00;">&lt;ntdll.memset&gt;</i></div>
<div class="r" style="left:230.5px;top:829px;color:#808080;">00007FFBA2D9F6BF</div>
<div class="r" style="left:522px;top:829px;"><i style="width:20px;">48</i><i style="width:10px;">:</i><i style="width:20px;">83</i><i style="width:20px;">64</i><i style="width:20px;">24</i><i style="width:10px;"> </i><i style="width:20px;">28</i><i style="width:10px;"> </i><i style="width:20px;">00</i></div>
<div class="r" style="left:823.5px;top:829px;"><i style="width:30px;">and</i><i style="width:10px;"> </i><i style="width:100px;color:#000080;">qword ptr </i><i style="width:20px;color:#D848D8;">ss</i><i style="width:10px;">:</i><i style="width:10px;background:#00FFFF;">[</i><i style="width:30px;color:#B03434;">rsp</i><i style="width:10px;color:#F27711;">+</i><i style="width:20px;color:#828200;">28</i><i style="width:10px;background:#00FFFF;">]</i><i style="width:10px;">,</i><i style="width:10px;color:#828200;">0</i></div>
<div class="r" style="left:230.5px;top:855px;color:#808080;">00007FFBA2D9F6C5</div>
<div class="r" style="left:522px;top:855px;"><i style="width:20px;">48</i><i style="width:10px;">:</i><i style="width:20px;">8D</i><i style="width:20px;">44</i><i style="width:20px;">24</i><i style="width:10px;"> </i><i style="width:20px;">40</i></div>
<div class="r" style="left:823.5px;top:855px;"><i style="width:30px;">lea</i><i style="width:10px;"> </i><i style="width:30px;color:#127C12;">rax</i><i style="width:10px;">,</i><i style="width:100px;color:#000080;">qword ptr </i><i style="width:20px;color:#D848D8;">ss</i><i style="width:10px;">:</i><i style="width:10px;background:#00FFFF;">[</i><i style="width:30px;color:#B03434;">rsp</i><i style="width:10px;color:#F27711;">+</i><i style="width:20px;color:#828200;">40</i><i style="width:10px;background:#00FFFF;">]</i></div>
<div class="r" style="left:230.5px;top:881px;color:#808080;">00007FFBA2D9F6CA</div>
<div class="r" style="left:522px;top:881px;"><i style="width:20px;">4C</i><i style="width:10px;">:</i><i style="width:20px;">8D</i><i style="width:20px;">4C</i><i style="width:20px;">24</i><i style="width:10px;"> </i><i style="width:20px;">50</i></div>
<div class="r" style="left:823.5px;top:881px;"><i style="width:30px;">lea</i><i style="width:10px;"> </i><i style="width:20px;color:#127C12;">r9</i><i style="width:10px;">,</i><i style="width:100px;color:#000080;">qword ptr </i><i style="width:20px;color:#D848D8;">ss</i><i style="width:10px;">:</i><i style="width:10px;background:#00FFFF;">[</i><i style="width:30px;color:#B03434;">rsp</i><i style="width:10px;color:#F27711;">+</i><i style="width:20px;color:#828200;">50</i><i style="width:10px;background:#00FFFF;">]</i></div>
<div class="r" style="left:1383px;top:881px;width:208.5px;overflow:hidden;color:#96591A;">[rsp+50]:"LdrpInitializeProcess"</div>
<div class="r" style="left:230.5px;top:907px;color:#808080;">00007FFBA2D9F6CF</div>
<div class="r" style="left:522px;top:907px;"><i style="width:20px;">48</i><i style="width:10px;">:</i><i style="width:20px;">89</i><i style="width:20px;">44</i><i style="width:20px;">24</i><i style="width:10px;"> </i><i style="width:20px;">20</i></div>
<div class="r" style="left:823.5px;top:907px;"><i style="width:30px;">mov</i><i style="width:10px;"> </i><i style="width:100px;color:#000080;">qword ptr </i><i style="width:20px;color:#D848D8;">ss</i><i style="width:10px;">:</i><i style="width:10px;background:#00FFFF;">[</i><i style="width:30px;color:#B03434;">rsp</i><i style="width:10px;color:#F27711;">+</i><i style="width:20px;color:#828200;">20</i><i style="width:10px;background:#00FFFF;">]</i><i style="width:10px;">,</i><i style="width:30px;color:#127C12;">rax</i></div>
<div class="r" style="left:230.5px;top:933px;color:#808080;height:21px;overflow:hidden;">00007FFBA2D9F6D4</div>
<div class="r" style="left:522px;top:933px;height:21px;overflow:hidden;"><i style="width:20px;">4C</i><i style="width:10px;">:</i><i style="width:20px;">8D</i><i style="width:20px;">44</i><i style="width:20px;">24</i><i style="width:10px;"> </i><i style="width:20px;">48</i></div>
<div class="r" style="left:823.5px;top:933px;height:21px;overflow:hidden;"><i style="width:30px;">lea</i><i style="width:10px;"> </i><i style="width:20px;color:#127C12;">r8</i><i style="width:10px;">,</i><i style="width:100px;color:#000080;">qword ptr </i><i style="width:20px;color:#D848D8;">ss</i><i style="width:10px;">:</i><i style="width:10px;background:#00FFFF;">[</i><i style="width:30px;color:#B03434;">rsp</i><i style="width:10px;color:#F27711;">+</i><i style="width:20px;color:#828200;">48</i><i style="width:10px;background:#00FFFF;">]</i></div>
<div class="r" style="left:1383px;top:933px;width:208.5px;overflow:hidden;color:#96591A;height:21px;overflow:hidden;">[rsp+48]:"LdrpInitializeProcess"</div>
<div class="a" style="left:1592px;top:179px;width:25px;height:775px;background:#F0F0F0;"></div>
<div class="a" style="left:1592px;top:717px;width:25px;height:26px;background:#CDCDCD;"></div>
<div class="a" style="left:223px;top:954px;width:1394px;height:25px;background:#F0F0F0;"></div>
<div class="a" style="left:249px;top:954px;width:553px;height:25px;background:#CDCDCD;"></div>
<svg style="left:0;top:0" width="1620" height="985"><polyline points="1599.0,195.8 1604.5,190.2 1610.0,195.8" fill="none" stroke="#4C4C4C" stroke-width="2.6"/><polyline points="1599.0,936.2 1604.5,941.8 1610.0,936.2" fill="none" stroke="#4C4C4C" stroke-width="2.6"/><polyline points="237.8,961.0 232.2,966.5 237.8,972.0" fill="none" stroke="#4C4C4C" stroke-width="2.6"/><polyline points="1575.2,961.0 1580.8,966.5 1575.2,972.0" fill="none" stroke="#4C4C4C" stroke-width="2.6"/></svg>
<div class="a" style="left:1622px;top:178px;width:762px;height:34px;background:#E1E1E1;border:1px solid #ADADAD;"></div>
<div class="u" style="left:1965px;top:183px;font-size:17px">隐藏</div>
<div class="g" style="left:2012px;top:183.5px;">FPU</div>
<div class="a" style="left:1622px;top:213px;width:738px;height:713px;background:#FFF8F0;"></div>
<div class="a" style="left:1622px;top:213px;width:738px;height:713px;overflow:hidden;"><div class="g" style="left:11.5px;top:8px">RAX   0000000000000000</div><div class="g" style="left:11.5px;top:28px">RBX   <i style="color:#D82828">0000000000000010</i></div><div class="g" style="left:11.5px;top:48px"><i style="color:#127C12">RCX   </i><i style="color:#D82828">00007FFBA2D6B234</i>     ntdll.00007FFBA2D6B234</div><div class="g" style="left:11.5px;top:68px"><i style="color:#127C12">RDX   </i>0000000000000000</div><div class="g" style="left:11.5px;top:88px">RBP   0000000000000000</div><div class="g" style="left:11.5px;top:108px">RSP   <i style="color:#D82828">00000042C891F080</i></div><div class="g" style="left:11.5px;top:128px">RSI   <i style="color:#D82828">00007FFBA2E006E0</i>     "LdrpInitializeProcess"</div><div class="g" style="left:11.5px;top:148px">RDI   <i style="color:#D82828">00000042C8A9B000</i></div><div class="g" style="left:11.5px;top:188px"><i style="color:#127C12">R8    </i><i style="color:#D82828">00000042C891F078</i></div><div class="g" style="left:11.5px;top:208px"><i style="color:#127C12">R9    </i>0000000000000000</div><div class="g" style="left:11.5px;top:228px">R10   0000000000000000</div><div class="g" style="left:11.5px;top:248px">R11   <i style="color:#D82828">0000000000000246</i>     L'Ɇ'</div><div class="g" style="left:11.5px;top:268px">R12   <i style="color:#D82828">0000000000000040</i>     '@'</div><div class="g" style="left:11.5px;top:288px">R13   0000000000000000</div><div class="g" style="left:11.5px;top:308px">R14   <i style="color:#D82828">00007FFBA2DFFFB0</i>     "minkernel\\ntdll\\ldrinit.c"</div><div class="g" style="left:11.5px;top:328px">R15   <i style="color:#D82828">000001A511290000</i></div><div class="g" style="left:11.5px;top:368px">RIP   <i style="color:#D82828">00007FFBA2D9F781</i>     ntdll.00007FFBA2D9F781</div><div class="g" style="left:11.5px;top:408px">RFLAGS   <i style="color:#D82828">0000000000000246</i></div><div class="g" style="left:11.5px;top:428px">ZF <i style="color:#D82828">1</i>  PF <i style="color:#D82828">1</i>  AF 0</div><div class="g" style="left:11.5px;top:448px">OF 0  SF 0  DF 0</div><div class="g" style="left:11.5px;top:468px">CF 0  TF 0  IF <i style="color:#D82828">1</i></div><div class="g" style="left:11.5px;top:508px">LastError  <i style="color:#D82828">00000002 (ERROR_FILE_NOT_FOUND)</i></div><div class="g" style="left:11.5px;top:528px">LastStatus <i style="color:#D82828">C0000034 (STATUS_OBJECT_NAME_NOT_FOUND)</i></div><div class="g" style="left:11.5px;top:568px">GS <i style="color:#D82828">002B</i>  FS <i style="color:#D82828">0053</i></div><div class="g" style="left:11.5px;top:588px">ES <i style="color:#D82828">002B</i>  DS <i style="color:#D82828">002B</i></div><div class="g" style="left:11.5px;top:608px">CS <i style="color:#D82828">0033</i>  SS <i style="color:#D82828">002B</i></div><div class="g" style="left:11.5px;top:648px">ST(0) 00000000000000000000 x87r0 <i style="font-family:'Liberation Sans';font-size:16px;display:inline-block;width:20px;-webkit-text-stroke:0">空</i> 0.000000000000000000</div><div class="g" style="left:11.5px;top:668px">ST(1) 00000000000000000000 x87r1 <i style="font-family:'Liberation Sans';font-size:16px;display:inline-block;width:20px;-webkit-text-stroke:0">空</i> 0.000000000000000000</div><div class="g" style="left:11.5px;top:688px">ST(2) 00000000000000000000 x87r2 <i style="font-family:'Liberation Sans';font-size:16px;display:inline-block;width:20px;-webkit-text-stroke:0">空</i> 0.000000000000000000</div><div class="g" style="left:11.5px;top:708px">ST(3) 00000000000000000000 x87r3 <i style="font-family:'Liberation Sans';font-size:16px;display:inline-block;width:20px;-webkit-text-stroke:0">空</i> 0.000000000000000000</div></div>
<div class="a" style="left:2360px;top:213px;width:25px;height:713px;background:#F0F0F0;"></div>
<div class="a" style="left:2360px;top:238px;width:25px;height:219px;background:#CDCDCD;"></div>
<div class="a" style="left:1622px;top:926px;width:763px;height:26px;background:#F0F0F0;"></div>
<div class="a" style="left:1647px;top:926px;width:252px;height:26px;background:#CDCDCD;"></div>
<svg style="left:0;top:0" width="2386" height="960"><polyline points="2367.0,228.8 2372.5,223.2 2378.0,228.8" fill="none" stroke="#4C4C4C" stroke-width="2.6"/><polyline points="2367.0,909.2 2372.5,914.8 2378.0,909.2" fill="none" stroke="#4C4C4C" stroke-width="2.6"/><polyline points="1636.8,933.5 1631.2,939.0 1636.8,944.5" fill="none" stroke="#4C4C4C" stroke-width="2.6"/><polyline points="2342.2,933.5 2347.8,939.0 2342.2,944.5" fill="none" stroke="#4C4C4C" stroke-width="2.6"/></svg>
<div class="a" style="left:1622px;top:954px;width:548px;height:35px;background:#E1E1E1;"></div>
<div class="u" style="left:1630px;top:959px;font-size:19.5px">默认</div>
<div class="u" style="left:1669px;top:959px;font-size:19.5px;letter-spacing:0.3px">(x64 </div>
<div class="u" style="left:1717px;top:959px;font-size:19.5px">快速调用</div>
<div class="u" style="left:1795px;top:959px;font-size:19.5px">)</div>
<svg style="left:2146px;top:964px" width="16" height="12"><path d="M3.5 4 h9 l-4.5 5.5z" fill="#222"/></svg>
<div class="a" style="left:2177px;top:953px;width:70px;height:36px;background:#FFFFFF;border:1px solid #7A7A7A;"></div>
<div class="u" style="left:2184px;top:958px;font-size:20px">5</div>
<div class="a" style="left:2214px;top:956px;width:30px;height:15px;background:#E1E1E1;border:1px solid #ADADAD;"></div>
<div class="a" style="left:2214px;top:971px;width:30px;height:15px;background:#E1E1E1;border:1px solid #ADADAD;"></div>
<svg style="left:2214px;top:956px" width="30" height="30"><path d="M10 9.5 h10 l-5 -5.5z M10 19.5 h10 l-5 5.5z" fill="#111"/></svg>
<div class="a" style="left:2253px;top:961px;width:20px;height:20px;background:#FFFFFF;border:1px solid #333;"></div>
<div class="u" style="left:2280px;top:959px;font-size:19.5px">解锁</div>
<div class="a" style="left:1621px;top:991px;width:762px;height:106px;background:#FFF8F0;border:1px solid #9C9C9C;"></div>
<div class="a" style="left:1622px;top:993px;width:734px;height:26px;background:#C0C0C0;"></div>
<div class="r" style="left:1631.5px;top:994px">1: rcx 00007FFBA2D6B234 ntdll.00007FFBA2D6B234</div>
<div class="r" style="left:1631.5px;top:1020px">2: rdx 0000000000000000</div>
<div class="r" style="left:1631.5px;top:1046px">3: r8 00000042C891F078 &amp;"</div>
<div class="u" style="left:1906px;top:1046px;font-size:18px">叻</div>
<div class="r" style="left:1924px;top:1046px">x\n€|$@"</div>
<div class="r" style="left:1631.5px;top:1072px">4: r9 0000000000000000</div>
<div class="a" style="left:2358px;top:992px;width:24px;height:104px;background:#F0F0F0;"></div>
<div class="a" style="left:2358px;top:1019px;width:24px;height:50px;background:#CDCDCD;"></div>
<svg style="left:0;top:0" width="2386" height="1100"><polyline points="2364.0,1009.8 2369.5,1004.2 2375.0,1009.8" fill="none" stroke="#4C4C4C" stroke-width="2.6"/><polyline points="2364.0,1081.2 2369.5,1086.8 2375.0,1081.2" fill="none" stroke="#4C4C4C" stroke-width="2.6"/></svg>
<div class="a" style="left:1px;top:983px;width:1617px;height:114px;background:#FFF8F0;border:1px solid #A0A0A0;border-left:none;"></div>
<div class="r" style="left:10.5px;top:985px">ntdll.00007FFBA2D9F783</div>
<div class="r" style="left:10.5px;top:1063px">.text:00007FFBA2D9F781 ntdll.dll:$CF781 #CEB81</div>
<div class="a" style="left:1px;top:1098px;width:1616px;height:48px;background:#F0F0F0;"></div>
<div class="a" style="left:2px;top:1101px;width:128px;height:45px;background:#FFFFFF;"></div>
<div class="u" style="left:51px;top:1111px;font-size:19.5px">转储</div>
<div class="u" style="left:96px;top:1110px;font-size:20px">1</div>
<div class="a" style="left:130px;top:1105px;width:123px;height:41px;border:1px solid #DCDCDC;border-bottom:none;border-left:1px solid #E4E4E4;"></div>
<div class="u" style="left:177px;top:1111px;font-size:19.5px">转储</div>
<div class="u" style="left:222px;top:1110px;font-size:20px">2</div>
<div class="a" style="left:253px;top:1105px;width:126px;height:41px;border:1px solid #DCDCDC;border-bottom:none;border-left:1px solid #E4E4E4;"></div>
<div class="u" style="left:303px;top:1111px;font-size:19.5px">转储</div>
<div class="u" style="left:348px;top:1110px;font-size:20px">3</div>
<div class="a" style="left:379px;top:1105px;width:126px;height:41px;border:1px solid #DCDCDC;border-bottom:none;border-left:1px solid #E4E4E4;"></div>
<div class="u" style="left:429px;top:1111px;font-size:19.5px">转储</div>
<div class="u" style="left:474px;top:1110px;font-size:20px">4</div>
<div class="a" style="left:505px;top:1105px;width:126px;height:41px;border:1px solid #DCDCDC;border-bottom:none;border-left:1px solid #E4E4E4;"></div>
<div class="u" style="left:555px;top:1111px;font-size:19.5px">转储</div>
<div class="u" style="left:600px;top:1110px;font-size:20px">5</div>
<div class="a" style="left:631px;top:1105px;width:125px;height:41px;border:1px solid #DCDCDC;border-bottom:none;border-left:1px solid #E4E4E4;"></div>
<div class="u" style="left:681px;top:1111px;font-size:19.5px">监视</div>
<div class="u" style="left:726px;top:1110px;font-size:20px">1</div>
<div class="a" style="left:756px;top:1105px;width:108px;height:41px;border:1px solid #DCDCDC;border-bottom:none;border-left:1px solid #E4E4E4;"></div>
<div class="u" style="left:806px;top:1111px;font-size:19.5px">局部</div>
<div class="a" style="left:864px;top:1105px;width:125px;height:41px;border:1px solid #DCDCDC;border-bottom:none;border-left:1px solid #E4E4E4;"></div>
<div class="u" style="left:915px;top:1111px;font-size:19.5px">结构体</div>
<svg style="left:0;top:1098px" width="1000" height="48" viewBox="0 1098 1000 48">
<rect x="18" y="1115" width="7" height="18" fill="#D9B43A"/><rect x="25" y="1112" width="8" height="20" fill="#C9CED4"/><rect x="33" y="1113" width="9" height="20" fill="#B8BEC6"/><circle cx="23" cy="1134" r="2.2" fill="#7C8A5A"/><circle cx="37" cy="1134" r="2.2" fill="#8A8F96"/>
<rect x="145" y="1115" width="7" height="18" fill="#D9B43A"/><rect x="152" y="1112" width="8" height="20" fill="#C9CED4"/><rect x="160" y="1113" width="9" height="20" fill="#B8BEC6"/><circle cx="150" cy="1134" r="2.2" fill="#7C8A5A"/><circle cx="164" cy="1134" r="2.2" fill="#8A8F96"/>
<rect x="271" y="1115" width="7" height="18" fill="#D9B43A"/><rect x="278" y="1112" width="8" height="20" fill="#C9CED4"/><rect x="286" y="1113" width="9" height="20" fill="#B8BEC6"/><circle cx="276" cy="1134" r="2.2" fill="#7C8A5A"/><circle cx="290" cy="1134" r="2.2" fill="#8A8F96"/>
<rect x="397" y="1115" width="7" height="18" fill="#D9B43A"/><rect x="404" y="1112" width="8" height="20" fill="#C9CED4"/><rect x="412" y="1113" width="9" height="20" fill="#B8BEC6"/><circle cx="402" cy="1134" r="2.2" fill="#7C8A5A"/><circle cx="416" cy="1134" r="2.2" fill="#8A8F96"/>
<rect x="523" y="1115" width="7" height="18" fill="#D9B43A"/><rect x="530" y="1112" width="8" height="20" fill="#C9CED4"/><rect x="538" y="1113" width="9" height="20" fill="#B8BEC6"/><circle cx="528" cy="1134" r="2.2" fill="#7C8A5A"/><circle cx="542" cy="1134" r="2.2" fill="#8A8F96"/>
<path d="M650 1116 l1 -5 l5 2z M670 1116 l-1 -5 l-5 2z" fill="#C98A3A"/><ellipse cx="660" cy="1123" rx="11" ry="10.5" fill="#DDA04C"/><ellipse cx="660" cy="1128" rx="6" ry="5" fill="#F4E3C4"/><circle cx="655.5" cy="1120.5" r="1.7" fill="#4A3418"/><circle cx="664.5" cy="1120.5" r="1.7" fill="#4A3418"/><path d="M658 1126 h4 l-2 2.5z" fill="#6A4420"/><path d="M653 1114 l2 4 M660 1112.5 v4 M667 1114 l-2 4" stroke="#8A5A24" stroke-width="1.3"/>
<path d="M774.5 1116 v14 M796.5 1116 v14" stroke="#8A8A8A" stroke-width="1.6"/><text x="777" y="1128" font-family="Liberation Mono" font-size="11" fill="#D04848">x=</text>
<path d="M889.5 1119 q1 -6.5 8 -5.5 q6.5 1.5 4 9.5 q-3 7.5 -13.5 11" fill="none" stroke="#E28C8C" stroke-width="4.6" stroke-dasharray="3.2 1"/>
</svg>
<div class="a" style="left:2px;top:1146px;width:1612px;height:350px;background:#FFF8F0;border:1px solid #A0A0A0;"></div>
<div class="a" style="left:3px;top:1147px;width:174px;height:31px;background:#C0C0C0;border-bottom:3px solid #8E8E8E;border-right:3px solid #9A9A9A;"></div><div class="u" style="left:12px;top:1149px;font-size:18.5px;">地址</div>
<div class="a" style="left:179px;top:1147px;width:483px;height:31px;background:#C0C0C0;border-bottom:3px solid #8E8E8E;border-right:3px solid #9A9A9A;"></div><div class="u" style="left:188px;top:1149px;font-size:18.5px;">十六进制</div>
<div class="a" style="left:664px;top:1147px;width:175px;height:31px;background:#C0C0C0;border-bottom:3px solid #8E8E8E;border-right:3px solid #9A9A9A;"></div><div class="r" style="left:673.5px;top:1149px">ASCII</div>
<div class="a" style="left:841px;top:1147px;width:745px;height:31px;background:#C0C0C0;border-bottom:3px solid #8E8E8E;border-right:3px solid #9A9A9A;"></div>
<div class="a" style="left:179px;top:1179px;width:30px;height:26px;background:#C0C0C0;"></div>
<div class="a" style="left:673px;top:1179px;width:10px;height:26px;background:#C0C0C0;"></div>
<div class="r" style="left:10.5px;top:1179px;width:165px;overflow:hidden;color:#000;">00007FFBA2CD1000</div>
<div class="r" style="left:186.5px;top:1179px;"><i style="width:30px;">CC</i><i style="width:30px;">CC</i><i style="width:30px;">CC</i><i style="width:30px;">CC</i><i style="width:30px;">CC</i><i style="width:30px;">CC</i><i style="width:30px;">CC</i><i style="width:30px;">CC</i><i style="width:30px;">CC</i><i style="width:30px;">CC</i><i style="width:30px;">CC</i><i style="width:30px;">CC</i><i style="width:30px;">CC</i><i style="width:30px;">CC</i><i style="width:30px;">CC</i><i style="width:30px;">CC</i></div>
<div class="r" style="left:672.5px;top:1179px;"><i style="width:10px;">Ì</i><i style="width:10px;">Ì</i><i style="width:10px;">Ì</i><i style="width:10px;">Ì</i><i style="width:10px;">Ì</i><i style="width:10px;">Ì</i><i style="width:10px;">Ì</i><i style="width:10px;">Ì</i><i style="width:10px;">Ì</i><i style="width:10px;">Ì</i><i style="width:10px;">Ì</i><i style="width:10px;">Ì</i><i style="width:10px;">Ì</i><i style="width:10px;">Ì</i><i style="width:10px;">Ì</i><i style="width:10px;">Ì</i></div>
<div class="r" style="left:10.5px;top:1205px;width:165px;overflow:hidden;color:#E02020;">00007FFBA2CD1010</div>
<div class="r" style="left:186.5px;top:1205px;"><i style="width:30px;color:#800080;">48</i><i style="width:30px;">89</i><i style="width:30px;color:#800080;">5C</i><i style="width:30px;color:#800080;">24</i><i style="width:30px;">10</i><i style="width:30px;color:#800080;">48</i><i style="width:30px;">89</i><i style="width:30px;color:#800080;">74</i><i style="width:30px;color:#800080;">24</i><i style="width:30px;">18</i><i style="width:30px;color:#800080;">57</i><i style="width:30px;color:#800080;">41</i><i style="width:30px;color:#800080;">56</i><i style="width:30px;color:#800080;">41</i><i style="width:30px;color:#800080;">57</i><i style="width:30px;color:#800080;">48</i></div>
<div class="r" style="left:672.5px;top:1205px;"><i style="width:10px;color:#800080;">H</i><i style="width:10px;">.</i><i style="width:10px;color:#800080;">\</i><i style="width:10px;color:#800080;">$</i><i style="width:10px;">.</i><i style="width:10px;color:#800080;">H</i><i style="width:10px;">.</i><i style="width:10px;color:#800080;">t</i><i style="width:10px;color:#800080;">$</i><i style="width:10px;">.</i><i style="width:10px;color:#800080;">W</i><i style="width:10px;color:#800080;">A</i><i style="width:10px;color:#800080;">V</i><i style="width:10px;color:#800080;">A</i><i style="width:10px;color:#800080;">W</i><i style="width:10px;color:#800080;">H</i></div>
<div class="r" style="left:10.5px;top:1231px;width:165px;overflow:hidden;color:#000;">00007FFBA2CD1020</div>
<div class="r" style="left:186.5px;top:1231px;"><i style="width:30px;">81</i><i style="width:30px;">EC</i><i style="width:30px;">80</i><i style="width:30px;color:#008000;">00</i><i style="width:30px;color:#008000;">00</i><i style="width:30px;color:#008000;">00</i><i style="width:30px;color:#800080;">48</i><i style="width:30px;">8B</i><i style="width:30px;">05</i><i style="width:30px;">C3</i><i style="width:30px;">04</i><i style="width:30px;">18</i><i style="width:30px;color:#008000;">00</i><i style="width:30px;color:#800080;">48</i><i style="width:30px;color:#800080;">33</i><i style="width:30px;">C4</i></div>
<div class="r" style="left:672.5px;top:1231px;"><i style="width:10px;">.</i><i style="width:10px;">ì</i><i style="width:10px;">.</i><i style="width:10px;color:#008000;">.</i><i style="width:10px;color:#008000;">.</i><i style="width:10px;color:#008000;">.</i><i style="width:10px;color:#800080;">H</i><i style="width:10px;">.</i><i style="width:10px;">.</i><i style="width:10px;">Ã</i><i style="width:10px;">.</i><i style="width:10px;">.</i><i style="width:10px;color:#008000;">.</i><i style="width:10px;color:#800080;">H</i><i style="width:10px;color:#800080;">3</i><i style="width:10px;">Ä</i></div>
<div class="r" style="left:10.5px;top:1257px;width:165px;overflow:hidden;color:#000;">00007FFBA2CD1030</div>
<div class="r" style="left:186.5px;top:1257px;"><i style="width:30px;color:#800080;">48</i><i style="width:30px;">89</i><i style="width:30px;color:#800080;">44</i><i style="width:30px;color:#800080;">24</i><i style="width:30px;color:#800080;">70</i><i style="width:30px;color:#800080;">4D</i><i style="width:30px;">8B</i><i style="width:30px;">F9</i><i style="width:30px;color:#800080;">41</i><i style="width:30px;">8B</i><i style="width:30px;">F8</i><i style="width:30px;color:#800080;">48</i><i style="width:30px;">8B</i><i style="width:30px;">C1</i><i style="width:30px;">85</i><i style="width:30px;">D2</i></div>
<div class="r" style="left:672.5px;top:1257px;"><i style="width:10px;color:#800080;">H</i><i style="width:10px;">.</i><i style="width:10px;color:#800080;">D</i><i style="width:10px;color:#800080;">$</i><i style="width:10px;color:#800080;">p</i><i style="width:10px;color:#800080;">M</i><i style="width:10px;">.</i><i style="width:10px;">ù</i><i style="width:10px;color:#800080;">A</i><i style="width:10px;">.</i><i style="width:10px;">ø</i><i style="width:10px;color:#800080;">H</i><i style="width:10px;">.</i><i style="width:10px;">Á</i><i style="width:10px;">.</i><i style="width:10px;">Ò</i></div>
<div class="r" style="left:10.5px;top:1283px;width:165px;overflow:hidden;color:#000;">00007FFBA2CD1040</div>
<div class="r" style="left:186.5px;top:1283px;"><i style="width:30px;">0F</i><i style="width:30px;">84</i><i style="width:30px;">07</i><i style="width:30px;color:#800080;">43</i><i style="width:30px;color:#800080;">0A</i><i style="width:30px;color:#008000;">00</i><i style="width:30px;">83</i><i style="width:30px;">FA</i><i style="width:30px;color:#800080;">0A</i><i style="width:30px;">0F</i><i style="width:30px;">85</i><i style="width:30px;">BB</i><i style="width:30px;color:#800080;">42</i><i style="width:30px;color:#800080;">0A</i><i style="width:30px;color:#008000;">00</i><i style="width:30px;color:#800080;">45</i></div>
<div class="r" style="left:672.5px;top:1283px;"><i style="width:10px;">.</i><i style="width:10px;">.</i><i style="width:10px;">.</i><i style="width:10px;color:#800080;">C</i><i style="width:10px;color:#800080;">.</i><i style="width:10px;color:#008000;">.</i><i style="width:10px;">.</i><i style="width:10px;">ú</i><i style="width:10px;color:#800080;">.</i><i style="width:10px;">.</i><i style="width:10px;">.</i><i style="width:10px;">»</i><i style="width:10px;color:#800080;">B</i><i style="width:10px;color:#800080;">.</i><i style="width:10px;color:#008000;">.</i><i style="width:10px;color:#800080;">E</i></div>
<div class="r" style="left:10.5px;top:1309px;width:165px;overflow:hidden;color:#000;">00007FFBA2CD1050</div>
<div class="r" style="left:186.5px;top:1309px;"><i style="width:30px;color:#800080;">33</i><i style="width:30px;">C9</i><i style="width:30px;color:#800080;">45</i><i style="width:30px;color:#800080;">33</i><i style="width:30px;">D2</i><i style="width:30px;color:#800080;">4C</i><i style="width:30px;">8D</i><i style="width:30px;color:#800080;">74</i><i style="width:30px;color:#800080;">24</i><i style="width:30px;color:#800080;">61</i><i style="width:30px;color:#800080;">48</i><i style="width:30px;">8B</i><i style="width:30px;color:#008000;">00</i><i style="width:30px;color:#800080;">4C</i><i style="width:30px;">8D</i><i style="width:30px;">1D</i></div>
<div class="r" style="left:672.5px;top:1309px;"><i style="width:10px;color:#800080;">3</i><i style="width:10px;">É</i><i style="width:10px;color:#800080;">E</i><i style="width:10px;color:#800080;">3</i><i style="width:10px;">Ò</i><i style="width:10px;color:#800080;">L</i><i style="width:10px;">.</i><i style="width:10px;color:#800080;">t</i><i style="width:10px;color:#800080;">$</i><i style="width:10px;color:#800080;">a</i><i style="width:10px;color:#800080;">H</i><i style="width:10px;">.</i><i style="width:10px;color:#008000;">.</i><i style="width:10px;color:#800080;">L</i><i style="width:10px;">.</i><i style="width:10px;">.</i></div>
<div class="r" style="left:10.5px;top:1335px;width:165px;overflow:hidden;color:#000;">00007FFBA2CD1060</div>
<div class="r" style="left:186.5px;top:1335px;"><i style="width:30px;color:#800080;">44</i><i style="width:30px;color:#800080;">32</i><i style="width:30px;">12</i><i style="width:30px;color:#008000;">00</i><i style="width:30px;color:#800080;">45</i><i style="width:30px;">85</i><i style="width:30px;">C9</i><i style="width:30px;">0F</i><i style="width:30px;">85</i><i style="width:30px;">EA</i><i style="width:30px;color:#800080;">42</i><i style="width:30px;color:#800080;">0A</i><i style="width:30px;color:#008000;">00</i><i style="width:30px;color:#800080;">44</i><i style="width:30px;">8B</i><i style="width:30px;">C2</i></div>
<div class="r" style="left:672.5px;top:1335px;"><i style="width:10px;color:#800080;">D</i><i style="width:10px;color:#800080;">2</i><i style="width:10px;">.</i><i style="width:10px;color:#008000;">.</i><i style="width:10px;color:#800080;">E</i><i style="width:10px;">.</i><i style="width:10px;">É</i><i style="width:10px;">.</i><i style="width:10px;">.</i><i style="width:10px;">ê</i><i style="width:10px;color:#800080;">B</i><i style="width:10px;color:#800080;">.</i><i style="width:10px;color:#008000;">.</i><i style="width:10px;color:#800080;">D</i><i style="width:10px;">.</i><i style="width:10px;">Â</i></div>
<div class="r" style="left:10.5px;top:1361px;width:165px;overflow:hidden;color:#000;">00007FFBA2CD1070</div>
<div class="r" style="left:186.5px;top:1361px;"><i style="width:30px;color:#800080;">33</i><i style="width:30px;">D2</i><i style="width:30px;color:#800080;">49</i><i style="width:30px;">F7</i><i style="width:30px;">F0</i><i style="width:30px;color:#800080;">49</i><i style="width:30px;color:#800000;">FF</i><i style="width:30px;">CE</i><i style="width:30px;">8B</i><i style="width:30px;">CA</i><i style="width:30px;color:#800080;">42</i><i style="width:30px;">8A</i><i style="width:30px;color:#800080;">0C</i><i style="width:30px;">19</i><i style="width:30px;color:#800080;">41</i><i style="width:30px;">88</i></div>
<div class="r" style="left:672.5px;top:1361px;"><i style="width:10px;color:#800080;">3</i><i style="width:10px;">Ò</i><i style="width:10px;color:#800080;">I</i><i style="width:10px;">÷</i><i style="width:10px;">ð</i><i style="width:10px;color:#800080;">I</i><i style="width:10px;color:#800000;">ÿ</i><i style="width:10px;">Î</i><i style="width:10px;">.</i><i style="width:10px;">Ê</i><i style="width:10px;color:#800080;">B</i><i style="width:10px;">.</i><i style="width:10px;color:#800080;">.</i><i style="width:10px;">.</i><i style="width:10px;color:#800080;">A</i><i style="width:10px;">.</i></div>
<div class="r" style="left:10.5px;top:1387px;width:165px;overflow:hidden;color:#000;">00007FFBA2CD1080</div>
<div class="r" style="left:186.5px;top:1387px;"><i style="width:30px;">0E</i><i style="width:30px;color:#800080;">48</i><i style="width:30px;">85</i><i style="width:30px;">C0</i><i style="width:30px;color:#800080;">75</i><i style="width:30px;">EA</i><i style="width:30px;color:#800080;">48</i><i style="width:30px;">8D</i><i style="width:30px;color:#800080;">74</i><i style="width:30px;color:#800080;">24</i><i style="width:30px;color:#800080;">61</i><i style="width:30px;color:#800080;">41</i><i style="width:30px;color:#800080;">2B</i><i style="width:30px;">F6</i><i style="width:30px;">85</i><i style="width:30px;color:#800000;">FF</i></div>
<div class="r" style="left:672.5px;top:1387px;"><i style="width:10px;">.</i><i style="width:10px;color:#800080;">H</i><i style="width:10px;">.</i><i style="width:10px;">À</i><i style="width:10px;color:#800080;">u</i><i style="width:10px;">ê</i><i style="width:10px;color:#800080;">H</i><i style="width:10px;">.</i><i style="width:10px;color:#800080;">t</i><i style="width:10px;color:#800080;">$</i><i style="width:10px;color:#800080;">a</i><i style="width:10px;color:#800080;">A</i><i style="width:10px;color:#800080;">+</i><i style="width:10px;">ö</i><i style="width:10px;">.</i><i style="width:10px;color:#800000;">ÿ</i></div>
<div class="r" style="left:10.5px;top:1413px;width:165px;overflow:hidden;color:#000;">00007FFBA2CD1090</div>
<div class="r" style="left:186.5px;top:1413px;"><i style="width:30px;">0F</i><i style="width:30px;">88</i><i style="width:30px;">E4</i><i style="width:30px;color:#800080;">42</i><i style="width:30px;color:#800080;">0A</i><i style="width:30px;color:#008000;">00</i><i style="width:30px;color:#800080;">3B</i><i style="width:30px;">F7</i><i style="width:30px;">0F</i><i style="width:30px;">8F</i><i style="width:30px;">01</i><i style="width:30px;color:#800080;">43</i><i style="width:30px;color:#800080;">0A</i><i style="width:30px;color:#008000;">00</i><i style="width:30px;color:#800080;">44</i><i style="width:30px;">8B</i></div>
<div class="r" style="left:672.5px;top:1413px;"><i style="width:10px;">.</i><i style="width:10px;">.</i><i style="width:10px;">ä</i><i style="width:10px;color:#800080;">B</i><i style="width:10px;color:#800080;">.</i><i style="width:10px;color:#008000;">.</i><i style="width:10px;color:#800080;">;</i><i style="width:10px;">÷</i><i style="width:10px;">.</i><i style="width:10px;">.</i><i style="width:10px;">.</i><i style="width:10px;color:#800080;">C</i><i style="width:10px;color:#800080;">.</i><i style="width:10px;color:#008000;">.</i><i style="width:10px;color:#800080;">D</i><i style="width:10px;">.</i></div>
<div class="r" style="left:10.5px;top:1439px;width:165px;overflow:hidden;color:#000;">00007FFBA2CD10A0</div>
<div class="r" style="left:186.5px;top:1439px;"><i style="width:30px;">C6</i><i style="width:30px;color:#800080;">49</i><i style="width:30px;">8B</i><i style="width:30px;">D6</i><i style="width:30px;color:#800080;">49</i><i style="width:30px;">8B</i><i style="width:30px;">CF</i><i style="width:30px;">E8</i><i style="width:30px;">D4</i><i style="width:30px;color:#800080;">0A</i><i style="width:30px;color:#800080;">0A</i><i style="width:30px;color:#008000;">00</i><i style="width:30px;color:#800080;">3B</i><i style="width:30px;">F7</i><i style="width:30px;color:#800080;">7D</i><i style="width:30px;">05</i></div>
<div class="r" style="left:672.5px;top:1439px;"><i style="width:10px;">Æ</i><i style="width:10px;color:#800080;">I</i><i style="width:10px;">.</i><i style="width:10px;">Ö</i><i style="width:10px;color:#800080;">I</i><i style="width:10px;">.</i><i style="width:10px;">Ï</i><i style="width:10px;">è</i><i style="width:10px;">Ô</i><i style="width:10px;color:#800080;">.</i><i style="width:10px;color:#800080;">.</i><i style="width:10px;color:#008000;">.</i><i style="width:10px;color:#800080;">;</i><i style="width:10px;">÷</i><i style="width:10px;color:#800080;">}</i><i style="width:10px;">.</i></div>
<div class="r" style="left:10.5px;top:1465px;width:165px;overflow:hidden;color:#000;">00007FFBA2CD10B0</div>
<div class="r" style="left:186.5px;top:1465px;"><i style="width:30px;color:#800080;">42</i><i style="width:30px;">C6</i><i style="width:30px;">04</i><i style="width:30px;color:#800080;">3E</i><i style="width:30px;color:#008000;">00</i><i style="width:30px;">EB</i><i style="width:30px;">02</i><i style="width:30px;">EB</i><i style="width:30px;">02</i><i style="width:30px;color:#800080;">33</i><i style="width:30px;">C0</i><i style="width:30px;color:#800080;">48</i><i style="width:30px;">8B</i><i style="width:30px;color:#800080;">4C</i><i style="width:30px;color:#800080;">24</i><i style="width:30px;color:#800080;">70</i></div>
<div class="r" style="left:672.5px;top:1465px;"><i style="width:10px;color:#800080;">B</i><i style="width:10px;">Æ</i><i style="width:10px;">.</i><i style="width:10px;color:#800080;">&gt;</i><i style="width:10px;color:#008000;">.</i><i style="width:10px;">ë</i><i style="width:10px;">.</i><i style="width:10px;">ë</i><i style="width:10px;">.</i><i style="width:10px;color:#800080;">3</i><i style="width:10px;">À</i><i style="width:10px;color:#800080;">H</i><i style="width:10px;">.</i><i style="width:10px;color:#800080;">L</i><i style="width:10px;color:#800080;">$</i><i style="width:10px;color:#800080;">p</i></div>
<div class="r" style="left:10.5px;top:1491px;width:165px;overflow:hidden;color:#000;height:4px;overflow:hidden;">00007FFBA2CD10C0</div>
<div class="r" style="left:186.5px;top:1491px;height:4px;overflow:hidden;"><i style="width:30px;color:#800080;">48</i><i style="width:30px;">C0</i><i style="width:30px;">C8</i><i style="width:30px;color:#800080;">24</i><i style="width:30px;color:#800080;">48</i><i style="width:30px;">8B</i><i style="width:30px;">05</i><i style="width:30px;">18</i><i style="width:30px;color:#008000;">00</i><i style="width:30px;color:#008000;">00</i><i style="width:30px;color:#008000;">00</i><i style="width:30px;">D2</i><i style="width:30px;color:#800080;">48</i><i style="width:30px;color:#800080;">33</i><i style="width:30px;">C4</i><i style="width:30px;color:#800080;">48</i></div>
<div class="r" style="left:672.5px;top:1491px;height:4px;overflow:hidden;"><i style="width:10px;color:#800080;">H</i><i style="width:10px;">À</i><i style="width:10px;">È</i><i style="width:10px;color:#800080;">$</i><i style="width:10px;color:#800080;">H</i><i style="width:10px;">.</i><i style="width:10px;">.</i><i style="width:10px;">.</i><i style="width:10px;color:#008000;">.</i><i style="width:10px;color:#008000;">.</i><i style="width:10px;color:#008000;">.</i><i style="width:10px;">Ò</i><i style="width:10px;color:#800080;">H</i><i style="width:10px;color:#800080;">3</i><i style="width:10px;">Ä</i><i style="width:10px;color:#800080;">H</i></div>
<div class="a" style="left:177px;top:1179px;width:2px;height:316px;background:#6E6E6E;"></div>
<div class="a" style="left:298px;top:1179px;width:2px;height:316px;background:#7C7878;"></div>
<div class="a" style="left:418px;top:1179px;width:2px;height:316px;background:#7C7878;"></div>
<div class="a" style="left:538px;top:1179px;width:2px;height:316px;background:#7C7878;"></div>
<div class="a" style="left:662px;top:1179px;width:2px;height:316px;background:#7C7878;"></div>
<div class="a" style="left:838px;top:1179px;width:2px;height:316px;background:#7C7878;"></div>
<div class="a" style="left:1584px;top:1179px;width:2px;height:316px;background:#7C7878;"></div>
<div class="a" style="left:1588px;top:1147px;width:25px;height:348px;background:#F0F0F0;"></div>
<div class="a" style="left:1588px;top:1174px;width:25px;height:24px;background:#CDCDCD;"></div>
<svg style="left:0;top:0" width="1620" height="1500"><polyline points="1595.0,1163.8 1600.5,1158.2 1606.0,1163.8" fill="none" stroke="#4C4C4C" stroke-width="2.6"/><polyline points="1595.0,1478.2 1600.5,1483.8 1606.0,1478.2" fill="none" stroke="#4C4C4C" stroke-width="2.6"/></svg>
<div class="a" style="left:1618px;top:1101px;width:766px;height:395px;background:#FFF8F0;border:1px solid #B0B0B0;"></div>
<div class="a" style="left:1619px;top:1103px;width:238px;height:26px;background:#000;"></div>
<div class="a" style="left:1859px;top:1103px;width:498px;height:26px;background:#C0C0C0;"></div>
<div class="a" style="left:1857px;top:1103px;width:2px;height:366px;background:#7C7878;"></div>
<div class="a" style="left:2100px;top:1103px;width:2px;height:366px;background:#7C7878;"></div>
<div class="a" style="left:1861px;top:1287px;width:4px;height:182px;background:#1010A8;"></div>
<div class="a" style="left:1861px;top:1287px;width:10px;height:3px;background:#1010A8;"></div>
<div class="r" style="left:1626.5px;top:1103px;color:#FFFFFF">00000042C891F080</div>
<div class="r" style="left:1866.5px;top:1102px">0000000000000000</div>
<div class="r" style="left:1626.5px;top:1129px;color:#808080">00000042C891F088</div>
<div class="r" style="left:1866.5px;top:1128px">00000042C891F110</div>
<div class="r" style="left:1626.5px;top:1155px;color:#808080">00000042C891F090</div>
<div class="r" style="left:1866.5px;top:1154px">0000000000000000</div>
<div class="r" style="left:1626.5px;top:1181px;color:#808080">00000042C891F098</div>
<div class="r" style="left:1866.5px;top:1180px">00000042C891F110</div>
<div class="r" style="left:1626.5px;top:1207px;color:#808080">00000042C891F0A0</div>
<div class="r" style="left:1866.5px;top:1206px">0000000000000000</div>
<div class="r" style="left:1626.5px;top:1233px;color:#808080">00000042C891F0A8</div>
<div class="r" style="left:1866.5px;top:1232px">0000000000000040</div>
<div class="r" style="left:1626.5px;top:1259px;color:#808080">00000042C891F0B0</div>
<div class="r" style="left:1866.5px;top:1258px">00000042C8A9B000</div>
<div class="r" style="left:1626.5px;top:1285px;color:#808080">00000042C891F0B8</div>
<div class="r" style="left:1872.5px;top:1284px">00007FFBA2DA2C7E</div>
<div class="u" style="left:2111px;top:1286px;font-size:19px;color:#E02020;letter-spacing:0.5px">返回到</div>
<div class="r" style="left:2181px;top:1285px;width:176px;overflow:hidden;color:#E02020;font-weight:bold;-webkit-text-stroke:0">ntdll.00007FFBA2DA2C7E</div>
<div class="r" style="left:1626.5px;top:1311px;color:#808080">00000042C891F0C0</div>
<div class="r" style="left:1872.5px;top:1310px">0000000000000000</div>
<div class="r" style="left:1626.5px;top:1337px;color:#808080">00000042C891F0C8</div>
<div class="r" style="left:1872.5px;top:1336px">00007FFBA2E006E0</div>
<div class="r" style="left:2110.5px;top:1337px;width:246px;overflow:hidden">"LdrpInitializeProcess"</div>
<div class="r" style="left:1626.5px;top:1363px;color:#808080">00000042C891F0D0</div>
<div class="r" style="left:1872.5px;top:1362px">00007FFBA2E006E0</div>
<div class="r" style="left:2110.5px;top:1363px;width:246px;overflow:hidden">"LdrpInitializeProcess"</div>
<div class="r" style="left:1626.5px;top:1389px;color:#808080">00000042C891F0D8</div>
<div class="r" style="left:1872.5px;top:1388px">00007FFBA2E006E0</div>
<div class="r" style="left:2110.5px;top:1389px;width:246px;overflow:hidden">"LdrpInitializeProcess"</div>
<div class="r" style="left:1626.5px;top:1415px;color:#808080">00000042C891F0E0</div>
<div class="r" style="left:1872.5px;top:1414px">00000042C891F1A8</div>
<div class="r" style="left:1626.5px;top:1441px;color:#808080">00000042C891F0E8</div>
<div class="r" style="left:1872.5px;top:1440px">00007FFB00000004</div>
<div class="a" style="left:2358px;top:1102px;width:25px;height:367px;background:#F0F0F0;"></div>
<div class="a" style="left:2358px;top:1129px;width:25px;height:26px;background:#CDCDCD;"></div>
<div class="a" style="left:1619px;top:1469px;width:764px;height:26px;background:#F0F0F0;"></div>
<div class="a" style="left:1645px;top:1469px;width:175px;height:25px;background:#CDCDCD;"></div>
<svg style="left:0;top:0" width="2386" height="1500"><polyline points="2364.0,1119.8 2369.5,1114.2 2375.0,1119.8" fill="none" stroke="#4C4C4C" stroke-width="2.6"/><polyline points="2364.0,1453.2 2369.5,1458.8 2375.0,1453.2" fill="none" stroke="#4C4C4C" stroke-width="2.6"/><polyline points="1634.8,1476.5 1629.2,1482.0 1634.8,1487.5" fill="none" stroke="#4C4C4C" stroke-width="2.6"/><polyline points="2340.2,1476.5 2345.8,1482.0 2340.2,1487.5" fill="none" stroke="#4C4C4C" stroke-width="2.6"/></svg>
<div class="a" style="left:1px;top:1496px;width:2384px;height:43px;background:#F0F0F0;"></div>
<div class="u" style="left:4px;top:1506px;font-size:20px">命令:</div>
<div class="a" style="left:63px;top:1499px;width:2189px;height:38px;background:#FFFFFF;border:1px solid #7A7A7A;"></div>
<div class="u" style="left:69px;top:1507px;font-size:18.5px;color:#9A9A9A;letter-spacing:0.9px">命令用逗号分隔(如汇编指令)</div>
<div class="r" style="left:329px;top:1505px;color:#9A9A9A;-webkit-text-stroke:0">: mov eax,ebx</div>
<div class="u" style="left:2258px;top:1506px;font-size:19.5px">默认值</div>
<svg style="left:2358px;top:1512px" width="16" height="12"><path d="M3.5 3 h9 l-4.5 5.5z" fill="#222"/></svg>
<div class="a" style="left:0px;top:1539px;width:2386px;height:49px;background:#C0C0C0;"></div>
<div class="a" style="left:5px;top:1545px;width:100px;height:38px;background:#FFFF00;"></div>
<div class="u" style="left:25px;top:1551px;font-size:20px;color:#E8500A">已暂停</div>
<div class="a" style="left:117px;top:1545px;width:2036px;height:38px;background:#C0C0C0;border:1px solid #9A9A9A;border-right-color:#E0E0E0;border-bottom-color:#E0E0E0;"></div>
<div class="u" style="left:124px;top:1551px;font-size:20px">已到达系统断点!</div>
<div class="a" style="left:2167px;top:1545px;width:216px;height:36px;background:#C0C0C0;border:1px solid #9A9A9A;border-right-color:#E0E0E0;border-bottom-color:#E0E0E0;"></div>
<div class="u" style="left:2173px;top:1551px;font-size:19.5px">调试耗时:</div>
<div class="u" style="left:2278px;top:1551px;font-size:19.5px;letter-spacing:0.5px">0:00:10:54</div>
<div class="a" style="left:0px;top:0px;width:2386px;height:1px;background:#5A5A5A;"></div><div class="a" style="left:0px;top:0px;width:1px;height:1588px;background:#6A6A6A;"></div><div class="a" style="left:2385px;top:0px;width:1px;height:1588px;background:#6A6A6A;"></div><div class="a" style="left:0px;top:1587px;width:2386px;height:1px;background:#6A6A6A;"></div>
</body></html>
